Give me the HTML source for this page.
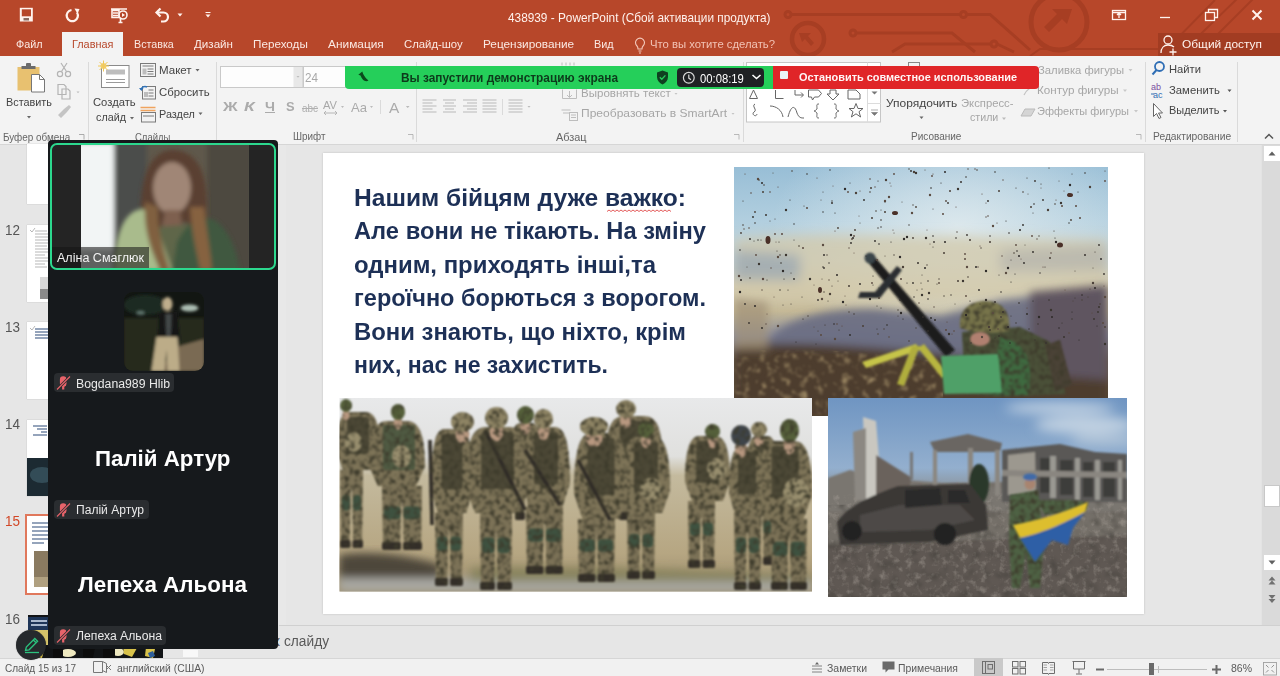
<!DOCTYPE html>
<html><head><meta charset="utf-8">
<style>
*{margin:0;padding:0;box-sizing:border-box}
html,body{width:1280px;height:676px;overflow:hidden;background:#E6E6E6;font-family:"Liberation Sans",sans-serif;position:relative}
.a{position:absolute}
.t{position:absolute;white-space:nowrap;line-height:1}
#title{left:0;top:0;width:1280px;height:56px;background:#B7472A}
.tab{position:absolute;top:38px;font-size:12.5px;color:#FBE9E3;white-space:nowrap;line-height:1}
#ribbon{left:0;top:56px;width:1280px;height:89px;background:#F3F3F3;border-bottom:1px solid #D6D6D6}
.rl{position:absolute;font-size:12px;color:#444;white-space:nowrap;line-height:1}
.gl{position:absolute;top:74px;font-size:10.5px;color:#666;white-space:nowrap;line-height:1}
.sep{position:absolute;top:6px;width:1px;height:80px;background:#DADADA}
.dis{color:#A6A6A6}
.stx{font-size:23.5px;font-weight:bold;color:#1D3056}
</style></head><body>

<!-- TITLE BAR -->
<div id="title" class="a">
<svg class="a" style="left:0;top:0" width="1280" height="56" viewBox="0 0 1280 56">
 <g fill="none" stroke="#A73E23" stroke-width="3">
  <circle cx="788" cy="14.5" r="3"></circle><path d="M791 14.5H960"></path><circle cx="963.5" cy="14.5" r="3"></circle><path d="M967 14.5H990L1030 50"></path>
  <circle cx="853" cy="33" r="3"></circle><path d="M856 33H952L975 52"></path>
  <path d="M892 52L905 44H991"></path><circle cx="994" cy="44" r="3"></circle><path d="M997 44L1014 52"></path>
  <circle cx="808" cy="39" r="16" stroke-width="4.5"></circle>
  <circle cx="1059" cy="22" r="28" stroke-width="5"></circle>
  <path d="M1160 56L1215 0M1178 56L1240 -4M1196 56L1262 -10" stroke-width="2"></path>
  <path d="M1030 56L1040 49H1280" stroke-width="2"></path>
 </g>
 <g fill="#A73E23">
  <path d="M799 33h12l-3 3 6 7-3 3-6-7-3 3z"></path>
  <path d="M1072 9h-20l5 5-13 13 5 5 13-13 5 5z"></path>
 </g>
 <rect x="1158" y="33" width="122" height="23" fill="#A23C22"></rect>
 <!-- QAT icons -->
 <g fill="none" stroke="#FFF3EE" stroke-width="1.6">
  <path d="M71.5 10a5.6 5.6 0 1 0 5.5 2.5" stroke-width="2.2"></path>
  <path d="M111 9h16M112 10.5h7v7h-7zM113 13h5M113 15.5h5M118.5 22.5h4M120.5 17.5v5"></path>
  <circle cx="123" cy="15" r="4"></circle>
  <path d="M158 12.5h5.5a4.5 4.5 0 0 1 0 9h-2.5" stroke-width="2.2"></path><path d="M160.5 8.5l-4 4 4 4" stroke-width="2.2"></path>
 </g>
 <rect x="19.8" y="7.8" width="13" height="13.7" fill="#FFF3EE"></rect>
 <rect x="21.8" y="9.3" width="9.2" height="7" fill="#B7472A"></rect>
 <rect x="23.5" y="18" width="5.5" height="2.5" fill="#8A6A60"></rect>
 <path d="M74.5 8.5l5 0.5-2 5z" fill="#FFF3EE"></path>
 <path d="M122 13l3 2-3 2z" fill="#FFF3EE"></path>
 <path d="M177.5 13.5h5l-2.5 3z" fill="#FFF3EE"></path>
 <path d="M205.5 12.5h5" stroke="#FFF3EE" stroke-width="1"></path><path d="M205.5 14.5h5l-2.5 3z" fill="#FFF3EE"></path>
 <!-- window buttons -->
 <g fill="none" stroke="#FFF3EE" stroke-width="1.3">
  <rect x="1112.5" y="10.5" width="13" height="9"></rect><path d="M1119 18V13M1117 15l2-2 2 2M1113 12.5h12"></path>
  <path d="M1160 17.5h10"></path>
  <rect x="1205.5" y="12.5" width="9" height="8"></rect><path d="M1208.5 12.5v-3h9v8h-3"></path>
 </g>
 <path d="M1252.5 10.5l9 9M1261.5 10.5l-9 9" stroke="#FFF3EE" stroke-width="2"></path>
 <!-- share icon -->
 <g fill="none" stroke="#FFF3EE" stroke-width="1.3">
  <circle cx="1168" cy="40" r="4"></circle><path d="M1161 53c0-5 3-8 7-8s5 1 6 2M1173 48.5v7M1169.5 52h7"></path>
 </g>
 <!-- tell me lightbulb -->
 <g fill="none" stroke="#F4C9BC" stroke-width="1.1">
  <path d="M637 46a4.5 4.5 0 1 1 6 0c-1 1-1 2-1 3h-4c0-1 0-2-1-3z"></path><path d="M638.5 51h3M639 53h2"></path>
 </g>
</svg>
<div class="t" style="left: 507.8px; top: 10.5px; font-size: 13px; color: rgb(255, 243, 238); transform: scaleX(0.9094); transform-origin: 0px 50%;">438939 - PowerPoint (Сбой активации продукта)</div>
<div class="tab" style="left: 15.6px; top: 39.3px; font-size: 11.5px; transform: scaleX(0.9406); transform-origin: 0px 50%;">Файл</div>
<div class="a" style="left:62px;top:32px;width:61px;height:25px;background:#F3F3F3"></div>
<div class="tab" style="left: 71.9px; top: 39.3px; font-size: 11.5px; color: rgb(183, 71, 42); transform: scaleX(0.9456); transform-origin: 0px 50%;">Главная</div>
<div class="tab" style="left: 134.4px; top: 39.3px; font-size: 11.5px; transform: scaleX(0.931); transform-origin: 0px 50%;">Вставка</div>
<div class="tab" style="left: 193.8px; top: 39.3px; font-size: 11.5px; transform: scaleX(1.0089); transform-origin: 0px 50%;">Дизайн</div>
<div class="tab" style="left: 253px; top: 39.3px; font-size: 11.5px; transform: scaleX(1.0157); transform-origin: 0px 50%;">Переходы</div>
<div class="tab" style="left: 328px; top: 39.3px; font-size: 11.5px; transform: scaleX(1.0333); transform-origin: 0px 50%;">Анимация</div>
<div class="tab" style="left: 403.8px; top: 39.3px; font-size: 11.5px; transform: scaleX(0.9845); transform-origin: 0px 50%;">Слайд-шоу</div>
<div class="tab" style="left: 482.8px; top: 39.3px; font-size: 11.5px; transform: scaleX(1.0269); transform-origin: 0px 50%;">Рецензирование</div>
<div class="tab" style="left: 593.8px; top: 39.3px; font-size: 11.5px; transform: scaleX(0.9417); transform-origin: 0px 50%;">Вид</div>
<div class="tab" style="left: 650px; top: 39.3px; font-size: 11.5px; color: rgb(242, 195, 181); transform: scaleX(0.9832); transform-origin: 0px 50%;">Что вы хотите сделать?</div>
<div class="tab" style="left: 1182px; top: 39.3px; font-size: 11.5px; color: rgb(255, 243, 238); transform: scaleX(1.0354); transform-origin: 0px 50%;">Общий доступ</div>
</div>

<!-- RIBBON -->
<div id="ribbon" class="a">
<div class="sep" style="left:88px"></div>
<div class="sep" style="left:216px"></div>
<div class="sep" style="left:416px"></div>
<div class="sep" style="left:743px"></div>
<div class="sep" style="left:1145px"></div>
<div class="sep" style="left:1237px"></div>
<svg class="a" style="left:0;top:0" width="1280" height="88" viewBox="0 56 1280 88">
 <!-- paste -->
 <rect x="17.5" y="67" width="22" height="23.5" fill="#E8C170"></rect>
 <path d="M21.5 66h14v3h-14z" fill="#6B6B6B"></path><rect x="26" y="63" width="5" height="4" rx="1" fill="#6B6B6B"></rect>
 <path d="M31.5 74.5h8l5 5v12.5h-13z" fill="#fff" stroke="#777" stroke-width="1"></path>
 <path d="M39.5 74.5v5h5" fill="none" stroke="#777" stroke-width="1"></path>
 <path d="M27 116h4l-2 2.5z" fill="#666"></path>
 <!-- scissors, copy, painter (disabled) -->
 <g fill="none" stroke="#B4B4B4" stroke-width="1.2">
  <circle cx="60" cy="74" r="2.6"></circle><circle cx="68" cy="74" r="2.6"></circle><path d="M61.5 71.5L67 63M66.5 71.5L61 63"></path>
  <path d="M58 84.5h6l2 2v8h-8zM62 89h6l2 2v8h-8z"></path>
 </g>
 <path d="M76.5 91.5h3l-1.5 1.8z" fill="#BBB"></path>
 <path d="M58 115l6-6 3 3-6 6zM64 109l5-4 2 2-4 5z" fill="#C4C4C4"></path>
 <path d="M79 134.5h5v5" fill="none" stroke="#999" stroke-width="0.8"></path>
 <!-- new slide -->
 <rect x="101.5" y="65.5" width="27.5" height="22" fill="#fff" stroke="#8A8A8A" stroke-width="1"></rect>
 <rect x="106" y="69.5" width="19" height="5" fill="#BDBDBD"></rect>
 <path d="M106 79.5h19M106 82.5h19" stroke="#9A9A9A" stroke-width="1"></path>
 <circle cx="103.5" cy="66" r="3" fill="#F1D27A"></circle>
 <path d="M103.5 60.5v11M98 66h11M99.5 62l8 8M107.5 62l-8 8" stroke="#F1C95A" stroke-width="1"></path>
 <path d="M130 117h4l-2 2.5z" fill="#666"></path>
 <!-- layout/reset/section icons -->
 <g fill="none" stroke="#7A7A7A" stroke-width="1">
  <rect x="140.5" y="63.5" width="15" height="13"></rect><path d="M142.5 66h11M147.5 69h6M147.5 71.5h6M147.5 74h6"></path>
  <rect x="142.5" y="86.5" width="13" height="12.5"></rect><path d="M148.5 90h5M148.5 93h5M148.5 96h5"></path>
  <rect x="141.5" y="112.5" width="14" height="9.5"></rect><path d="M143 116h11"></path>
 </g>
 <rect x="142.5" y="68.5" width="4" height="6" fill="#BDBDBD"></rect>
 <rect x="144" y="92" width="4" height="5" fill="#BDBDBD"></rect>
 <path d="M141 90a4 4 0 0 1 6-3" fill="none" stroke="#2F72B8" stroke-width="1.5"></path><path d="M139 88l2.5 3 2-3z" fill="#2F72B8"></path>
 <path d="M140.5 107.5h15M140.5 110.5h15" stroke="#F0A35E" stroke-width="1.3"></path>
 <path d="M195.5 69h4l-2 2.5z M198.5 112.5h4l-2 2.5z" fill="#666"></path>
 <!-- font boxes -->
 <rect x="220.5" y="66.5" width="82" height="21" fill="#FDFDFD" stroke="#C9C9C9"></rect>
 <rect x="293.5" y="67" width="9" height="20" fill="#E8E8E8"></rect>
 <rect x="303.5" y="66.5" width="42" height="21" fill="#FDFDFD" stroke="#C9C9C9"></rect>
 <path d="M296.5 76h3l-1.5 1.8z" fill="#BBB"></path>
 <!-- align icons -->
 <g stroke="#B9B9B9" stroke-width="1.1">
  <path d="M422.5 100h14M422.5 103h10M422.5 106h14M422.5 109h10M422.5 112h14"></path>
  <path d="M443 100h13M445 103h9M443 106h13M445 109h9M443 112h13"></path>
  <path d="M463 100h14M467 103h10M463 106h14M467 109h10M463 112h14"></path>
  <path d="M482.5 100h14M482.5 103h14M482.5 106h14M482.5 109h14M482.5 112h14"></path>
  <path d="M508.5 100h14M508.5 103h14M508.5 106h14M508.5 109h14M508.5 112h14"></path>
 </g>
 <path d="M502.5 99v16" stroke="#DADADA"></path>
 <path d="M527.5 106h3l-1.5 1.8z M406.5 106h3l-1.5 1.8z" fill="#BBB"></path>
 <g fill="none" stroke="#BDBDBD" stroke-width="1">
  <path d="M562 62.5v3M566 62.5v3M570 62.5v3M574 62.5v3"></path>
  <path d="M562.5 89.5v9h14v-9M569.5 91v6M567 95l2.5 2.5 2.5-2.5"></path>
  <path d="M561.5 110h9M563 113h7"></path><rect x="569.5" y="112.5" width="8" height="8" fill="#F3F3F3"></rect><path d="M571 115h5M571 117.5h5"></path>
 </g>
 <path d="M674.5 93h3l-1.5 1.8z M731.5 113h3l-1.5 1.8z" fill="#C4C4C4"></path>
 <path d="M734 134.5h5v5M408 134.5h5v5M1136 134.5h5v5" fill="none" stroke="#AAA" stroke-width="0.8"></path>
 <!-- shapes gallery -->
 <rect x="746.5" y="62.5" width="134" height="59.5" fill="#fff" stroke="#C6C6C6"></rect>
 <path d="M867.5 62.5v59.5M867.5 84.5h13M867.5 103.5h13" stroke="#DCDCDC" fill="none"></path>
 <path d="M871.5 91.5h6l-3 3z" fill="#777"></path>
 <path d="M871 110h7M871.5 112.5h6l-3 3z" fill="#777" stroke="#777" stroke-width="0.6"></path>
 <g fill="none" stroke="#666" stroke-width="1">
  <path d="M749.5 98.5l4-8.5 4 8.5z"></path>
  <path d="M775.5 90v8.5h8"></path>
  <path d="M795 90v5h8M801 92.5l2.5 2.5-2.5 2.5"></path>
  <path d="M808.5 90h10l3 3.5-3 3.5h-4l-2 3-1-3h-3z"></path>
  <path d="M830 90v4h-3l6 6 6-6h-3v-4z"></path>
  <path d="M848 90v9h12v-5l-4-4z"></path>
  <path d="M755 104c-4 2 3 6-1 8-3 2 2 6 3 2"></path>
  <path d="M770 106c6 0 12 4 13 11"></path>
  <path d="M788 117c3-12 7-12 9-4 2 5 4 5 7 5"></path>
  <path d="M819 104c-3 0-2 1-2 5-1 1-2 2-3 2 1 0 2 1 3 2 0 4-1 5 2 5"></path>
  <path d="M834 104c3 0 2 1 2 5 1 1 2 2 3 2-1 0-2 1-3 2 0 4 1 5-2 5"></path>
  <path d="M856 103.5l2 5h5l-4 3.2 1.6 5.3-4.6-3.2-4.6 3.2 1.6-5.3-4-3.2h5z"></path>
 </g>
 <!-- arrange -->
 <rect x="908.5" y="62.5" width="11" height="11" fill="none" stroke="#888"></rect>
 <path d="M919.5 116.5h4l-2 2.5z" fill="#666"></path>
 <path d="M1002 117.5h4l-2 2.5z" fill="#BBB"></path>
 <path d="M1128.5 69h4l-2 2.5z M1123 89.5h4l-2 2.5z M1134 110h4l-2 2.5z" fill="#C8C8C8"></path>
 <g fill="none" stroke="#C2C2C2" stroke-width="1.2">
  <path d="M1023 73l6-6 5 5-6 6zM1034 67v8"></path>
  <path d="M1024 95c3-6 7-8 11-8"></path>
 </g>
 <path d="M1021 116l4-7h10l-4 7z" fill="#D5D5D5" stroke="#BBB" stroke-width="1"></path>
 <!-- edit group -->
 <circle cx="1159.5" cy="66.5" r="4.5" fill="none" stroke="#2F6EB5" stroke-width="1.8"></circle>
 <path d="M1156.5 70l-4 4.5" stroke="#2F6EB5" stroke-width="2"></path>
 <text x="1151" y="90" font-family="Liberation Sans" font-size="9" fill="#7A4FA0">ab</text>
 <text x="1153" y="97.5" font-family="Liberation Sans" font-size="9" fill="#2F6EB5">ac</text>
 <path d="M1151 94h3" stroke="#2F6EB5" stroke-width="1"></path>
 <path d="M1153.5 103.5v13l3-3 2.5 5 2-1-2.5-4.5h4z" fill="#fff" stroke="#666" stroke-width="1"></path>
 <path d="M1227.5 89.5h4l-2 2.5z M1223 110h4l-2 2.5z" fill="#555"></path>
 <path d="M1265 138.5l4-4 4 4" fill="none" stroke="#555" stroke-width="1.5"></path>
</svg>
<!-- texts: cap-top minus 0.12*fs -->
<div class="rl" style="left: 6px; top: 41.2px; font-size: 11.5px; transform: scaleX(0.9436); transform-origin: 0px 50%;">Вставить</div>
<div class="gl" style="left: 2.7px; top: 75.8px; transform: scaleX(0.9431); transform-origin: 0px 50%;">Буфер обмена</div>
<div class="rl" style="left: 93px; top: 40.9px; font-size: 11.5px; transform: scaleX(0.9767); transform-origin: 0px 50%;">Создать</div>
<div class="rl" style="left: 96px; top: 56.2px; font-size: 11.5px; transform: scaleX(0.9375); transform-origin: 0px 50%;">слайд</div>
<div class="rl" style="left: 158.6px; top: 9.3px; font-size: 11.5px; transform: scaleX(1.0016); transform-origin: 0px 50%;">Макет</div>
<div class="rl" style="left: 158.6px; top: 31.2px; font-size: 11.5px; transform: scaleX(0.9897); transform-origin: 0px 50%;">Сбросить</div>
<div class="rl" style="left: 158.6px; top: 53.2px; font-size: 11.5px; transform: scaleX(0.9443); transform-origin: 0px 50%;">Раздел</div>
<div class="gl" style="left: 134.6px; top: 75.8px; transform: scaleX(0.9055); transform-origin: 0px 50%;">Слайды</div>
<div class="rl dis" style="left: 305.4px; top: 15.5px; font-size: 12px; color: rgb(168, 168, 168); transform: scaleX(0.9731); transform-origin: 0px 50%;">24</div>
<div class="rl" style="left: 222.9px; top: 44.3px; font-size: 13.5px; font-weight: bold; color: rgb(171, 171, 171); transform: scaleX(1.1964); transform-origin: 0px 50%;">Ж</div>
<div class="rl" style="left: 244px; top: 44.3px; font-size: 13.5px; font-weight: bold; font-style: italic; color: rgb(171, 171, 171); transform: scaleX(1.2872); transform-origin: 0px 50%;">К</div>
<div class="rl" style="left: 265.3px; top: 44.3px; font-size: 13.5px; font-weight: bold; color: rgb(171, 171, 171); text-decoration: underline; transform: scaleX(1.0526); transform-origin: 0px 50%;">Ч</div>
<div class="rl" style="left: 285.6px; top: 44.3px; font-size: 13.5px; font-weight: bold; color: rgb(171, 171, 171); transform: scaleX(0.9539); transform-origin: 0px 50%;">S</div>
<div class="rl" style="left: 302px; top: 47px; font-size: 11px; color: rgb(176, 176, 176); text-decoration: line-through; transform: scaleX(0.9014); transform-origin: 0px 50%;">abc</div>
<div class="rl" style="left: 323px; top: 43.5px; font-size: 11px; color: rgb(168, 168, 168); transform: scaleX(1.0101); transform-origin: 0px 50%;">AV</div>
<svg class="a" style="left:323px;top:54px" width="16" height="6"><path d="M1 3h13M3 1L1 3l2 2M12 1l2 2-2 2" fill="none" stroke="#B0B0B0" stroke-width="0.9"></path></svg>
<div class="rl" style="left: 351px; top: 45px; font-size: 13px; color: rgb(171, 171, 171); transform: scaleX(1.0059); transform-origin: 0px 50%;">Aa</div>
<div class="rl" style="left: 388.7px; top: 43.5px; font-size: 15px; color: rgb(171, 171, 171); transform: scaleX(1.0284); transform-origin: 0px 50%;">A</div>
<svg class="a" style="left:340px;top:49px" width="80" height="6"><path d="M1 1h3l-1.5 2zM30 1h3l-1.5 2zM66 1h3l-1.5 2z" fill="#BBB"></path></svg>
<div class="a" style="left:380px;top:44px;width:1px;height:14px;background:#DADADA"></div>
<div class="gl" style="left: 292.5px; top: 75.2px; transform: scaleX(0.9408); transform-origin: 0px 50%;">Шрифт</div>
<div class="rl dis" style="left: 580.5px; top: 32px; font-size: 11.5px; transform: scaleX(1.0023); transform-origin: 0px 50%;">Выровнять текст</div>
<div class="rl dis" style="left: 580.5px; top: 52px; font-size: 11.5px; transform: scaleX(1.0466); transform-origin: 0px 50%;">Преобразовать в SmartArt</div>
<div class="gl" style="left: 556px; top: 75.5px; transform: scaleX(1.0384); transform-origin: 0px 50%;">Абзац</div>
<div class="rl" style="left: 885.5px; top: 41.6px; font-size: 11.5px; transform: scaleX(1.0418); transform-origin: 0px 50%;">Упорядочить</div>
<div class="rl dis" style="left: 961px; top: 41.6px; font-size: 11.5px; transform: scaleX(0.9807); transform-origin: 0px 50%;">Экспресс-</div>
<div class="rl dis" style="left: 969.7px; top: 56.2px; font-size: 11.5px; transform: scaleX(0.9255); transform-origin: 0px 50%;">стили</div>
<div class="rl dis" style="left: 1038px; top: 8.6px; font-size: 11.5px; transform: scaleX(0.9792); transform-origin: 0px 50%;">Заливка фигуры</div>
<div class="rl dis" style="left: 1037px; top: 28.8px; font-size: 11.5px; transform: scaleX(1.0159); transform-origin: 0px 50%;">Контур фигуры</div>
<div class="rl dis" style="left: 1037px; top: 49.5px; font-size: 11.5px; transform: scaleX(0.9599); transform-origin: 0px 50%;">Эффекты фигуры</div>
<div class="gl" style="left: 910.6px; top: 74.8px; transform: scaleX(0.9529); transform-origin: 0px 50%;">Рисование</div>
<div class="rl" style="left: 1169px; top: 8.1px; font-size: 11.5px; transform: scaleX(0.9748); transform-origin: 0px 50%;">Найти</div>
<div class="rl" style="left: 1169px; top: 28.6px; font-size: 11.5px; transform: scaleX(0.9828); transform-origin: 0px 50%;">Заменить</div>
<div class="rl" style="left: 1169px; top: 49.3px; font-size: 11.5px; transform: scaleX(0.9498); transform-origin: 0px 50%;">Выделить</div>
<div class="gl" style="left: 1152.8px; top: 75.2px; transform: scaleX(0.9775); transform-origin: 0px 50%;">Редактирование</div>
</div>

<!-- SHARE BARS -->
<div class="a" style="left:345px;top:66px;width:430px;height:22.5px;background:#25CF5A;border-radius:0 0 0 4px"></div>
<svg class="a" style="left:355px;top:70px" width="16" height="15"><path d="M3.3 4.8L7.3 1.5 8.2 4C9.5 6.5 11 8.5 13.5 10.5 11.5 11.8 9.3 11 7.8 9.5 6.7 8.3 6 7 5.5 5.6z" fill="#0B4A1C"></path></svg>
<div class="t" style="left: 401px; top: 72.3px; font-size: 12px; font-weight: bold; color: rgb(13, 58, 27); transform: scaleX(0.9886); transform-origin: 0px 50%;">Вы запустили демонстрацию экрана</div>
<svg class="a" style="left:656px;top:70px" width="13" height="15"><path d="M6.5 0.5l5.5 2v4.5c0 3.5-2.5 6-5.5 7.5C3.5 13 1 10.5 1 7V2.5z" fill="#0F4020"></path><path d="M3.8 7.2l2 2 3.6-3.8" fill="none" stroke="#27CC5C" stroke-width="1.3"></path></svg>
<div class="a" style="left:677px;top:68.3px;width:87px;height:18.7px;background:#1F2124;border-radius:4px"></div>
<svg class="a" style="left:682px;top:71px" width="14" height="14"><circle cx="6.8" cy="6.8" r="5.4" fill="none" stroke="#D8D8D8" stroke-width="1.2"></circle><path d="M6.8 3.5v3.6l2.2 1.6" fill="none" stroke="#D8D8D8" stroke-width="1.2"></path></svg>
<div class="t" style="left: 700px; top: 72px; font-size: 13px; color: rgb(255, 255, 255); transform: scaleX(0.8655); transform-origin: 0px 50%;">00:08:19</div>
<svg class="a" style="left:751px;top:73px" width="11" height="8"><path d="M1.5 2l4 3.5 4-3.5" fill="none" stroke="#fff" stroke-width="1.6"></path></svg>
<div class="a" style="left:772.5px;top:66px;width:266.5px;height:22.7px;background:#E02528;border-radius:0 4px 4px 0"></div>
<div class="a" style="left:779.7px;top:71px;width:8.5px;height:8px;background:#EAF3F6;border-radius:1px"></div>
<div class="t" style="left: 798.8px; top: 72.4px; font-size: 11.5px; font-weight: bold; color: rgb(255, 246, 246); transform: scaleX(0.9488); transform-origin: 0px 50%;">Остановить совместное использование</div>

<!-- SLIDE -->
<div class="a" id="slide" style="left:323px;top:153px;width:821px;height:461px;background:#fff;box-shadow:0 0 2px rgba(0,0,0,.18)"></div>
<div class="t stx" style="left: 354.2px; top: 186.7px; transform: scaleX(1.0455); transform-origin: 0px 50%;">Нашим бійцям дуже важко:</div>
<div class="t stx" style="left: 354.2px; top: 220.2px; transform: scaleX(1.009); transform-origin: 0px 50%;">Але вони не тікають. На зміну</div>
<div class="t stx" style="left: 354.2px; top: 253.7px; transform: scaleX(1.0181); transform-origin: 0px 50%;">одним, приходять інші,та</div>
<div class="t stx" style="left: 354.2px; top: 287.2px; transform: scaleX(1.0008); transform-origin: 0px 50%;">героїчно борються з ворогом.</div>
<div class="t stx" style="left: 354.2px; top: 320.7px; transform: scaleX(1.016); transform-origin: 0px 50%;">Вони знають, що ніхто, крім</div>
<div class="t stx" style="left: 354.2px; top: 354.2px; transform: scaleX(0.9811); transform-origin: 0px 50%;">них, нас не захистить.</div>
<svg class="a" style="left:0;top:0" width="1280" height="676" viewBox="0 0 1280 676">
 <defs>
  <clipPath id="c1"><rect x="734" y="167" width="374" height="249"></rect></clipPath>
  <clipPath id="c2"><rect x="339.5" y="398" width="472.5" height="193.5"></rect></clipPath>
  <clipPath id="c3"><rect x="828" y="398" width="299" height="199"></rect></clipPath>
  <linearGradient id="g1" x1="0" y1="0" x2="0" y2="1"><stop offset="0" stop-color="#98BED6"></stop><stop offset="0.22" stop-color="#B2CFDF"></stop><stop offset="0.38" stop-color="#C6D2D4"></stop><stop offset="0.48" stop-color="#D2CAB0"></stop><stop offset="0.58" stop-color="#C4B896"></stop><stop offset="0.68" stop-color="#8C8E9C"></stop><stop offset="0.78" stop-color="#6A5A4C"></stop><stop offset="1" stop-color="#56402E"></stop></linearGradient>
  <radialGradient id="g1b" cx="0.6" cy="0.25" r="0.5"><stop offset="0" stop-color="#E6EEF0" stop-opacity="0.8"></stop><stop offset="1" stop-color="#E6EEF0" stop-opacity="0"></stop></radialGradient>
  <linearGradient id="g2" x1="0" y1="0" x2="0" y2="1">
   <stop offset="0" stop-color="#E8E9EA"></stop><stop offset="0.3" stop-color="#E0E0DE"></stop><stop offset="0.4" stop-color="#C4BA9E"></stop><stop offset="0.8" stop-color="#B6A682"></stop><stop offset="1" stop-color="#9A8C6C"></stop>
  </linearGradient>
  <linearGradient id="g3" x1="0" y1="0" x2="0" y2="1">
   <stop offset="0" stop-color="#6F95C2"></stop><stop offset="0.35" stop-color="#93AFCE"></stop><stop offset="0.48" stop-color="#8A8E90"></stop><stop offset="0.58" stop-color="#6A6866"></stop><stop offset="0.8" stop-color="#5E5852"></stop><stop offset="1" stop-color="#4C4640"></stop>
  </linearGradient>
  <filter id="camo" x="-5%" y="-5%" width="110%" height="110%" color-interpolation-filters="sRGB"><feTurbulence type="fractalNoise" baseFrequency="0.2" numOctaves="2" seed="5" result="n"></feTurbulence><feColorMatrix in="n" type="matrix" values="0 0 0 0 0.24  0 0 0 0 0.23  0 0 0 0 0.17  0 0 0 -3 1.7" result="dk"></feColorMatrix><feComposite in="dk" in2="SourceGraphic" operator="in" result="d2"></feComposite><feMerge result="m"><feMergeNode in="SourceGraphic"></feMergeNode><feMergeNode in="d2"></feMergeNode></feMerge><feGaussianBlur in="m" stdDeviation="1"></feGaussianBlur></filter>
  <filter id="soil" x="0" y="0" width="100%" height="100%" color-interpolation-filters="sRGB"><feTurbulence type="fractalNoise" baseFrequency="0.12" numOctaves="3" seed="9" result="n"></feTurbulence><feColorMatrix in="n" type="matrix" values="0 0 0 0 0.60  0 0 0 0 0.52  0 0 0 0 0.38  0 0 0 -3 1.45" result="t"></feColorMatrix><feGaussianBlur in="t" stdDeviation="0.8" result="tb"></feGaussianBlur><feComposite in="tb" in2="SourceAlpha" operator="in"></feComposite></filter>
  <filter id="rubble" x="0" y="0" width="100%" height="100%" color-interpolation-filters="sRGB"><feTurbulence type="fractalNoise" baseFrequency="0.15" numOctaves="3" seed="4" result="n"></feTurbulence><feColorMatrix in="n" type="matrix" values="0 0 0 0 0.66  0 0 0 0 0.63  0 0 0 0 0.60  0 0 0 -3 1.5" result="t"></feColorMatrix><feGaussianBlur in="t" stdDeviation="0.6" result="tb"></feGaussianBlur><feComposite in="tb" in2="SourceAlpha" operator="in"></feComposite></filter>
  <filter id="dark" x="0" y="0" width="100%" height="100%" color-interpolation-filters="sRGB"><feTurbulence type="fractalNoise" baseFrequency="0.1" numOctaves="2" seed="13" result="n"></feTurbulence><feColorMatrix in="n" type="matrix" values="0 0 0 0 0.25  0 0 0 0 0.24  0 0 0 0 0.22  0 0 0 -3 1.5" result="t"></feColorMatrix><feGaussianBlur in="t" stdDeviation="0.8" result="tb"></feGaussianBlur><feComposite in="tb" in2="SourceAlpha" operator="in"></feComposite></filter>
  <filter id="bl1" x="-20%" y="-20%" width="140%" height="140%"><feGaussianBlur stdDeviation="1.2"></feGaussianBlur></filter>
  <filter id="bl3" x="-20%" y="-20%" width="140%" height="140%"><feGaussianBlur stdDeviation="4"></feGaussianBlur></filter>
  <filter id="bl6" x="-30%" y="-30%" width="160%" height="160%"><feGaussianBlur stdDeviation="6"></feGaussianBlur></filter>
 </defs>
 <!-- PHOTO 1: mortar -->
 <g clip-path="url(#c1)">
  <rect x="734" y="167" width="374" height="249" fill="url(#g1)"></rect>
  <rect x="734" y="167" width="374" height="249" fill="url(#g1b)"></rect>
  <g filter="url(#bl6)">
   <path d="M734 240 C800 232 900 235 1108 240 L1108 300 L734 302z" fill="#D2C8AA" opacity="0.75"></path>
   <path d="M734 250 L 800 255 L 800 280 L734 280z" fill="#8A9CB0" opacity="0.6"></path>
   <path d="M1000 250 L 1108 245 L1108 270 L1000 272z" fill="#A8A8A8" opacity="0.5"></path>
  </g>
  <g filter="url(#bl3)">
   <path d="M765 350 C770 320 830 306 880 309 L 940 316 L1000 300 L1108 288 L1108 400 L 765 400z" fill="#6A6C82" opacity="0.92"></path>
   <path d="M1030 292 L1108 285 L1108 400 L1030 400z" fill="#5E5460"></path>
   <path d="M734 346 C800 340 880 348 960 356 L1000 372 L1108 380 L1108 416 L734 416z" fill="#4E3C2E"></path>
   <path d="M734 298 L 768 302 L 768 350 L734 350z" fill="#A09078" opacity="0.7"></path>
  </g>
  <path d="M734 352 C800 346 880 352 940 362 L 945 416 L734 416z" fill="#000" filter="url(#soil)"></path>
  <g filter="url(#bl1)">
   <path d="M867 261 L875 257 L955 350 L946 357 z" fill="#1E1E1E"></path>
   <circle cx="870" cy="258" r="5.5" fill="#3A4448"></circle>
   <path d="M860 292 L875 292 L897 266 L902 270 L880 298 L858 298z" fill="#2A2F32"></path>
   <path d="M862 362 L916 344 L920 350 L866 368z" fill="#C6C448"></path>
   <path d="M912 346 L920 346 L904 386 L897 384z" fill="#B0AE3C"></path>
   <path d="M918 348 L924 344 L948 374 L942 378z" fill="#B8B640"></path>
  </g>
  <g filter="url(#camo)">
   <path d="M962 332 L1020 327 L1050 342 L1066 394 L1000 397 L965 393z" fill="#4A5038"></path>
   <path d="M1000 337 C1025 342 1035 360 1028 395 L 990 395z" fill="#3E6A40"></path>
   <path d="M1045 345 L1060 340 L1072 385 L1055 392z" fill="#4A4236"></path>
   <path d="M960 328 C958 308 972 301 986 301 C1002 301 1011 312 1009 331 C995 334 975 334 960 328z" fill="#77744A"></path>
  </g>
  <ellipse cx="980" cy="339" rx="10" ry="7" fill="#B08070" filter="url(#bl1)"></ellipse>
  <path d="M941 356 L998 354 L1002 393 L944 394z" fill="#4FA068" filter="url(#bl1)"></path>
  <circle cx="903" cy="267" r="1.2" fill="#4A4038"></circle><circle cx="903" cy="319" r="0.6" fill="#2E2A28"></circle><circle cx="1033" cy="252" r="0.9" fill="#2E2A28"></circle><circle cx="770" cy="221" r="0.5" fill="#3A3530"></circle><circle cx="956" cy="238" r="0.8" fill="#2E2A28"></circle><circle cx="966" cy="315" r="0.5" fill="#3A3530"></circle><circle cx="749" cy="323" r="0.9" fill="#3A3530"></circle><circle cx="1023" cy="225" r="0.9" fill="#2E2A28"></circle><circle cx="928" cy="281" r="0.8" fill="#3A3530"></circle><circle cx="981" cy="248" r="0.7" fill="#4A4038"></circle><circle cx="1105" cy="344" r="1.2" fill="#3A3530"></circle><circle cx="997" cy="223" r="0.6" fill="#5A4A40"></circle><circle cx="747" cy="267" r="0.5" fill="#4A4038"></circle><circle cx="775" cy="219" r="0.5" fill="#3A3530"></circle><circle cx="1049" cy="168" r="0.6" fill="#3A3530"></circle><circle cx="909" cy="341" r="0.8" fill="#4A4038"></circle><circle cx="763" cy="279" r="1.2" fill="#5A4A40"></circle><circle cx="860" cy="223" r="0.5" fill="#4A4038"></circle><circle cx="1016" cy="188" r="0.6" fill="#3A3530"></circle><circle cx="740" cy="250" r="0.8" fill="#2E2A28"></circle><circle cx="988" cy="201" r="0.9" fill="#2E2A28"></circle><circle cx="1100" cy="304" r="0.8" fill="#4A4038"></circle><circle cx="779" cy="242" r="0.6" fill="#3A3530"></circle><circle cx="835" cy="339" r="1.2" fill="#5A4A40"></circle><circle cx="1105" cy="171" r="0.6" fill="#4A4038"></circle><circle cx="1104" cy="274" r="0.9" fill="#3A3530"></circle><circle cx="751" cy="193" r="0.8" fill="#5A4A40"></circle><circle cx="739" cy="276" r="1.2" fill="#5A4A40"></circle><circle cx="878" cy="181" r="0.6" fill="#2E2A28"></circle><circle cx="741" cy="233" r="0.9" fill="#4A4038"></circle><circle cx="783" cy="271" r="1.2" fill="#2E2A28"></circle><circle cx="1056" cy="200" r="0.6" fill="#5A4A40"></circle><circle cx="1072" cy="312" r="0.6" fill="#2E2A28"></circle><circle cx="794" cy="279" r="0.9" fill="#2E2A28"></circle><circle cx="990" cy="236" r="0.8" fill="#3A3530"></circle><circle cx="891" cy="186" r="0.5" fill="#5A4A40"></circle><circle cx="824" cy="292" r="0.7" fill="#4A4038"></circle><circle cx="1040" cy="273" r="0.7" fill="#2E2A28"></circle><circle cx="1079" cy="340" r="0.6" fill="#2E2A28"></circle><circle cx="913" cy="283" r="0.9" fill="#3A3530"></circle><circle cx="839" cy="330" r="0.6" fill="#3A3530"></circle><circle cx="761" cy="240" r="0.6" fill="#3A3530"></circle><circle cx="753" cy="217" r="0.9" fill="#2E2A28"></circle><circle cx="770" cy="192" r="0.8" fill="#5A4A40"></circle><circle cx="979" cy="290" r="0.9" fill="#2E2A28"></circle><circle cx="954" cy="331" r="0.8" fill="#5A4A40"></circle><circle cx="995" cy="338" r="0.5" fill="#3A3530"></circle><circle cx="914" cy="297" r="0.7" fill="#2E2A28"></circle><circle cx="1105" cy="181" r="0.9" fill="#5A4A40"></circle><circle cx="1008" cy="327" r="1.0" fill="#2E2A28"></circle><circle cx="1029" cy="329" r="0.7" fill="#3A3530"></circle><circle cx="989" cy="327" r="1.2" fill="#4A4038"></circle><circle cx="1085" cy="173" r="0.8" fill="#3A3530"></circle><circle cx="967" cy="235" r="0.9" fill="#3A3530"></circle><circle cx="961" cy="182" r="1.0" fill="#3A3530"></circle><circle cx="1103" cy="323" r="1.0" fill="#5A4A40"></circle><circle cx="879" cy="298" r="0.9" fill="#4A4038"></circle><circle cx="898" cy="316" r="0.5" fill="#3A3530"></circle><circle cx="850" cy="183" r="0.5" fill="#2E2A28"></circle><circle cx="1090" cy="187" r="1.2" fill="#4A4038"></circle><circle cx="830" cy="170" r="0.7" fill="#2E2A28"></circle><circle cx="986" cy="203" r="0.6" fill="#5A4A40"></circle><circle cx="980" cy="246" r="0.6" fill="#5A4A40"></circle><circle cx="885" cy="212" r="1.0" fill="#4A4038"></circle><circle cx="1033" cy="301" r="0.6" fill="#2E2A28"></circle><circle cx="878" cy="271" r="0.7" fill="#2E2A28"></circle><circle cx="786" cy="255" r="1.2" fill="#3A3530"></circle><circle cx="999" cy="336" r="0.7" fill="#2E2A28"></circle><circle cx="777" cy="251" r="0.6" fill="#4A4038"></circle><circle cx="877" cy="260" r="1.0" fill="#5A4A40"></circle><circle cx="1001" cy="317" r="0.9" fill="#4A4038"></circle><circle cx="854" cy="314" r="0.7" fill="#3A3530"></circle><circle cx="986" cy="217" r="0.7" fill="#5A4A40"></circle><circle cx="976" cy="267" r="1.0" fill="#2E2A28"></circle><circle cx="885" cy="201" r="1.2" fill="#5A4A40"></circle><circle cx="823" cy="192" r="0.5" fill="#3A3530"></circle><circle cx="901" cy="279" r="1.0" fill="#5A4A40"></circle><circle cx="1090" cy="289" r="0.6" fill="#4A4038"></circle><circle cx="830" cy="294" r="1.2" fill="#4A4038"></circle><circle cx="933" cy="174" r="0.6" fill="#5A4A40"></circle><circle cx="1024" cy="263" r="0.9" fill="#2E2A28"></circle><circle cx="881" cy="308" r="0.6" fill="#3A3530"></circle><circle cx="887" cy="325" r="0.8" fill="#2E2A28"></circle><circle cx="902" cy="202" r="0.5" fill="#4A4038"></circle><circle cx="939" cy="283" r="0.9" fill="#5A4A40"></circle><circle cx="907" cy="283" r="0.6" fill="#3A3530"></circle><circle cx="1003" cy="312" r="1.0" fill="#3A3530"></circle><circle cx="814" cy="327" r="0.5" fill="#5A4A40"></circle><circle cx="934" cy="307" r="0.7" fill="#5A4A40"></circle><circle cx="1072" cy="319" r="0.7" fill="#3A3530"></circle><circle cx="749" cy="228" r="0.8" fill="#5A4A40"></circle><circle cx="916" cy="173" r="1.2" fill="#3A3530"></circle><circle cx="894" cy="174" r="0.9" fill="#5A4A40"></circle><circle cx="990" cy="330" r="0.8" fill="#2E2A28"></circle><circle cx="1105" cy="327" r="0.9" fill="#4A4038"></circle><circle cx="1085" cy="255" r="1.0" fill="#3A3530"></circle><circle cx="1016" cy="245" r="0.9" fill="#5A4A40"></circle><circle cx="1043" cy="267" r="0.6" fill="#5A4A40"></circle><circle cx="851" cy="235" r="1.2" fill="#2E2A28"></circle><circle cx="848" cy="192" r="0.9" fill="#5A4A40"></circle><circle cx="948" cy="203" r="0.9" fill="#3A3530"></circle><circle cx="922" cy="275" r="0.5" fill="#3A3530"></circle><circle cx="926" cy="238" r="1.2" fill="#3A3530"></circle><circle cx="917" cy="290" r="0.5" fill="#4A4038"></circle><circle cx="889" cy="337" r="0.8" fill="#5A4A40"></circle><circle cx="827" cy="255" r="0.7" fill="#4A4038"></circle><circle cx="1069" cy="333" r="0.8" fill="#5A4A40"></circle><circle cx="776" cy="242" r="0.5" fill="#5A4A40"></circle><circle cx="783" cy="305" r="0.5" fill="#3A3530"></circle><circle cx="807" cy="208" r="1.0" fill="#5A4A40"></circle><circle cx="855" cy="230" r="0.9" fill="#4A4038"></circle><circle cx="774" cy="297" r="0.5" fill="#5A4A40"></circle><circle cx="1001" cy="292" r="0.8" fill="#3A3530"></circle><circle cx="875" cy="241" r="0.9" fill="#2E2A28"></circle><circle cx="935" cy="320" r="0.9" fill="#2E2A28"></circle><circle cx="931" cy="318" r="0.9" fill="#2E2A28"></circle><circle cx="822" cy="299" r="1.2" fill="#5A4A40"></circle><circle cx="1069" cy="223" r="0.7" fill="#2E2A28"></circle><circle cx="816" cy="344" r="0.5" fill="#2E2A28"></circle><circle cx="1064" cy="191" r="0.5" fill="#5A4A40"></circle><circle cx="879" cy="244" r="0.8" fill="#2E2A28"></circle><circle cx="810" cy="279" r="1.2" fill="#3A3530"></circle><circle cx="771" cy="268" r="0.7" fill="#5A4A40"></circle><circle cx="778" cy="257" r="1.2" fill="#5A4A40"></circle><circle cx="922" cy="289" r="0.6" fill="#3A3530"></circle><circle cx="914" cy="172" r="1.2" fill="#4A4038"></circle><circle cx="790" cy="200" r="0.6" fill="#2E2A28"></circle><circle cx="1046" cy="343" r="1.0" fill="#3A3530"></circle><circle cx="950" cy="191" r="1.0" fill="#4A4038"></circle><circle cx="764" cy="185" r="0.8" fill="#4A4038"></circle><circle cx="893" cy="230" r="0.6" fill="#5A4A40"></circle><circle cx="740" cy="292" r="1.2" fill="#2E2A28"></circle><circle cx="803" cy="248" r="1.0" fill="#5A4A40"></circle><circle cx="885" cy="202" r="0.6" fill="#3A3530"></circle><circle cx="925" cy="170" r="0.5" fill="#4A4038"></circle><circle cx="946" cy="201" r="0.9" fill="#5A4A40"></circle><circle cx="1033" cy="213" r="0.5" fill="#2E2A28"></circle><circle cx="1037" cy="239" r="0.7" fill="#5A4A40"></circle><circle cx="1019" cy="303" r="0.8" fill="#2E2A28"></circle><circle cx="1003" cy="180" r="0.7" fill="#5A4A40"></circle><circle cx="909" cy="169" r="0.7" fill="#3A3530"></circle><circle cx="821" cy="335" r="1.0" fill="#5A4A40"></circle><circle cx="860" cy="284" r="0.9" fill="#2E2A28"></circle><circle cx="933" cy="236" r="0.8" fill="#2E2A28"></circle><circle cx="995" cy="302" r="0.9" fill="#3A3530"></circle><circle cx="778" cy="187" r="0.6" fill="#5A4A40"></circle><circle cx="900" cy="257" r="1.2" fill="#2E2A28"></circle><circle cx="975" cy="169" r="0.7" fill="#5A4A40"></circle><circle cx="838" cy="228" r="0.9" fill="#4A4038"></circle><circle cx="1093" cy="268" r="0.5" fill="#4A4038"></circle><circle cx="1035" cy="181" r="0.9" fill="#3A3530"></circle><circle cx="878" cy="334" r="0.8" fill="#4A4038"></circle><circle cx="1094" cy="319" r="0.9" fill="#3A3530"></circle><circle cx="894" cy="255" r="0.7" fill="#4A4038"></circle><circle cx="957" cy="232" r="0.7" fill="#4A4038"></circle><circle cx="978" cy="267" r="0.7" fill="#5A4A40"></circle><circle cx="745" cy="304" r="0.9" fill="#3A3530"></circle><circle cx="970" cy="240" r="1.0" fill="#4A4038"></circle><circle cx="755" cy="223" r="0.8" fill="#3A3530"></circle><circle cx="951" cy="295" r="0.7" fill="#3A3530"></circle><circle cx="1031" cy="207" r="1.0" fill="#4A4038"></circle><circle cx="828" cy="301" r="0.5" fill="#3A3530"></circle><circle cx="1082" cy="295" r="0.8" fill="#2E2A28"></circle><circle cx="1098" cy="312" r="0.9" fill="#3A3530"></circle><circle cx="754" cy="241" r="0.5" fill="#2E2A28"></circle><circle cx="1054" cy="231" r="0.6" fill="#3A3530"></circle><circle cx="870" cy="192" r="0.8" fill="#4A4038"></circle><circle cx="958" cy="281" r="1.0" fill="#4A4038"></circle><circle cx="870" cy="299" r="1.2" fill="#2E2A28"></circle><circle cx="1088" cy="297" r="0.6" fill="#4A4038"></circle><circle cx="778" cy="326" r="1.2" fill="#5A4A40"></circle><circle cx="837" cy="275" r="1.0" fill="#2E2A28"></circle><circle cx="970" cy="301" r="0.6" fill="#2E2A28"></circle><circle cx="921" cy="283" r="0.6" fill="#3A3530"></circle><circle cx="968" cy="169" r="0.7" fill="#4A4038"></circle><circle cx="745" cy="174" r="0.6" fill="#5A4A40"></circle><circle cx="762" cy="183" r="1.0" fill="#2E2A28"></circle><circle cx="939" cy="279" r="0.7" fill="#4A4038"></circle><circle cx="913" cy="205" r="0.7" fill="#4A4038"></circle><circle cx="1011" cy="316" r="0.5" fill="#3A3530"></circle><circle cx="901" cy="313" r="1.2" fill="#2E2A28"></circle><circle cx="900" cy="300" r="0.8" fill="#2E2A28"></circle><circle cx="872" cy="283" r="0.9" fill="#5A4A40"></circle><circle cx="843" cy="302" r="1.2" fill="#2E2A28"></circle><circle cx="894" cy="233" r="0.5" fill="#4A4038"></circle><circle cx="1059" cy="181" r="0.5" fill="#4A4038"></circle><circle cx="944" cy="253" r="1.0" fill="#4A4038"></circle><circle cx="846" cy="305" r="0.5" fill="#5A4A40"></circle><circle cx="814" cy="285" r="0.5" fill="#5A4A40"></circle><circle cx="919" cy="303" r="0.7" fill="#5A4A40"></circle><circle cx="1062" cy="206" r="1.0" fill="#5A4A40"></circle><circle cx="871" cy="188" r="1.0" fill="#4A4038"></circle><circle cx="946" cy="330" r="1.0" fill="#5A4A40"></circle><circle cx="898" cy="310" r="0.7" fill="#4A4038"></circle><circle cx="853" cy="238" r="1.0" fill="#2E2A28"></circle><circle cx="767" cy="314" r="0.5" fill="#5A4A40"></circle><circle cx="986" cy="271" r="1.2" fill="#2E2A28"></circle><circle cx="1009" cy="233" r="0.8" fill="#2E2A28"></circle><circle cx="1045" cy="267" r="0.6" fill="#3A3530"></circle><circle cx="1016" cy="323" r="0.7" fill="#3A3530"></circle><circle cx="817" cy="178" r="0.6" fill="#5A4A40"></circle><circle cx="1093" cy="283" r="1.2" fill="#4A4038"></circle><circle cx="759" cy="264" r="1.2" fill="#3A3530"></circle><circle cx="859" cy="216" r="0.5" fill="#5A4A40"></circle><circle cx="767" cy="280" r="0.6" fill="#3A3530"></circle><circle cx="1011" cy="282" r="0.6" fill="#2E2A28"></circle><circle cx="916" cy="328" r="0.7" fill="#4A4038"></circle><circle cx="881" cy="227" r="0.7" fill="#2E2A28"></circle><circle cx="918" cy="263" r="1.0" fill="#3A3530"></circle><circle cx="998" cy="329" r="0.8" fill="#5A4A40"></circle><circle cx="1051" cy="310" r="1.2" fill="#3A3530"></circle><circle cx="1064" cy="337" r="1.0" fill="#3A3530"></circle><circle cx="929" cy="293" r="1.2" fill="#3A3530"></circle><circle cx="891" cy="242" r="0.6" fill="#2E2A28"></circle><circle cx="1010" cy="343" r="0.8" fill="#2E2A28"></circle><circle cx="854" cy="236" r="0.9" fill="#5A4A40"></circle><circle cx="837" cy="324" r="0.8" fill="#5A4A40"></circle><circle cx="1006" cy="221" r="0.6" fill="#2E2A28"></circle><circle cx="1073" cy="301" r="0.5" fill="#4A4038"></circle><circle cx="1072" cy="174" r="0.5" fill="#2E2A28"></circle><circle cx="804" cy="206" r="0.6" fill="#4A4038"></circle><circle cx="956" cy="207" r="0.6" fill="#5A4A40"></circle><circle cx="884" cy="329" r="0.7" fill="#4A4038"></circle><circle cx="1051" cy="253" r="0.8" fill="#5A4A40"></circle><circle cx="980" cy="304" r="0.5" fill="#4A4038"></circle><circle cx="1055" cy="238" r="0.6" fill="#2E2A28"></circle><circle cx="1032" cy="236" r="0.9" fill="#5A4A40"></circle><circle cx="1027" cy="178" r="0.6" fill="#3A3530"></circle><circle cx="1059" cy="328" r="0.8" fill="#2E2A28"></circle><circle cx="999" cy="275" r="0.6" fill="#4A4038"></circle><circle cx="794" cy="224" r="0.7" fill="#2E2A28"></circle><circle cx="971" cy="343" r="0.7" fill="#3A3530"></circle><circle cx="791" cy="304" r="0.5" fill="#2E2A28"></circle><circle cx="1039" cy="317" r="1.2" fill="#2E2A28"></circle><circle cx="766" cy="215" r="1.0" fill="#3A3530"></circle><circle cx="1065" cy="290" r="0.5" fill="#5A4A40"></circle><circle cx="743" cy="201" r="0.6" fill="#3A3530"></circle><circle cx="1025" cy="245" r="0.5" fill="#4A4038"></circle><circle cx="930" cy="195" r="1.2" fill="#5A4A40"></circle><circle cx="852" cy="239" r="0.9" fill="#5A4A40"></circle><circle cx="1104" cy="286" r="0.5" fill="#5A4A40"></circle><circle cx="763" cy="192" r="1.0" fill="#4A4038"></circle><circle cx="986" cy="300" r="1.2" fill="#3A3530"></circle><circle cx="977" cy="170" r="0.8" fill="#4A4038"></circle><circle cx="823" cy="267" r="0.8" fill="#3A3530"></circle><circle cx="1052" cy="317" r="1.0" fill="#2E2A28"></circle><circle cx="1069" cy="194" r="1.0" fill="#4A4038"></circle><circle cx="1082" cy="300" r="0.7" fill="#4A4038"></circle><circle cx="941" cy="183" r="0.6" fill="#2E2A28"></circle><circle cx="875" cy="187" r="0.7" fill="#5A4A40"></circle><circle cx="944" cy="296" r="0.7" fill="#4A4038"></circle><circle cx="1041" cy="184" r="0.6" fill="#3A3530"></circle><circle cx="784" cy="279" r="0.6" fill="#2E2A28"></circle><circle cx="807" cy="174" r="0.8" fill="#3A3530"></circle><circle cx="773" cy="173" r="0.5" fill="#4A4038"></circle><circle cx="886" cy="180" r="1.2" fill="#4A4038"></circle><circle cx="1078" cy="192" r="0.6" fill="#2E2A28"></circle><circle cx="1039" cy="236" r="0.7" fill="#4A4038"></circle><circle cx="966" cy="296" r="0.9" fill="#5A4A40"></circle><circle cx="1099" cy="307" r="1.0" fill="#3A3530"></circle><circle cx="832" cy="201" r="0.7" fill="#4A4038"></circle><circle cx="775" cy="234" r="0.9" fill="#5A4A40"></circle><circle cx="1027" cy="314" r="0.9" fill="#2E2A28"></circle><circle cx="829" cy="263" r="0.7" fill="#2E2A28"></circle><circle cx="866" cy="256" r="0.6" fill="#2E2A28"></circle><circle cx="1101" cy="259" r="1.0" fill="#2E2A28"></circle><circle cx="945" cy="172" r="1.0" fill="#2E2A28"></circle><circle cx="1023" cy="192" r="0.8" fill="#4A4038"></circle><circle cx="993" cy="226" r="1.2" fill="#5A4A40"></circle><circle cx="834" cy="324" r="0.8" fill="#2E2A28"></circle><circle cx="824" cy="268" r="0.9" fill="#3A3530"></circle><circle cx="943" cy="214" r="1.0" fill="#5A4A40"></circle><circle cx="958" cy="189" r="1.2" fill="#3A3530"></circle><circle cx="842" cy="326" r="0.6" fill="#5A4A40"></circle><circle cx="1043" cy="200" r="0.9" fill="#3A3530"></circle><circle cx="904" cy="239" r="1.2" fill="#2E2A28"></circle><circle cx="849" cy="286" r="1.0" fill="#4A4038"></circle><circle cx="963" cy="281" r="1.2" fill="#3A3530"></circle><circle cx="794" cy="240" r="0.5" fill="#2E2A28"></circle><circle cx="931" cy="188" r="0.8" fill="#2E2A28"></circle><circle cx="860" cy="191" r="0.6" fill="#5A4A40"></circle><circle cx="755" cy="306" r="1.0" fill="#2E2A28"></circle><circle cx="885" cy="256" r="0.5" fill="#4A4038"></circle><circle cx="863" cy="326" r="1.0" fill="#4A4038"></circle><circle cx="1014" cy="253" r="0.8" fill="#4A4038"></circle><circle cx="1041" cy="188" r="0.5" fill="#5A4A40"></circle><circle cx="930" cy="244" r="0.5" fill="#5A4A40"></circle><circle cx="1071" cy="220" r="0.9" fill="#4A4038"></circle><circle cx="1006" cy="273" r="1.2" fill="#5A4A40"></circle><circle cx="1062" cy="323" r="0.6" fill="#3A3530"></circle><circle cx="1048" cy="210" r="1.2" fill="#4A4038"></circle><circle cx="1095" cy="252" r="0.5" fill="#2E2A28"></circle><circle cx="937" cy="284" r="0.6" fill="#3A3530"></circle><circle cx="1105" cy="297" r="1.2" fill="#5A4A40"></circle><circle cx="1056" cy="242" r="1.2" fill="#2E2A28"></circle><circle cx="818" cy="300" r="0.9" fill="#3A3530"></circle><circle cx="1070" cy="185" r="1.2" fill="#2E2A28"></circle><circle cx="781" cy="263" r="0.8" fill="#3A3530"></circle><circle cx="845" cy="296" r="0.5" fill="#5A4A40"></circle><circle cx="799" cy="246" r="0.8" fill="#4A4038"></circle><circle cx="788" cy="290" r="0.6" fill="#3A3530"></circle><circle cx="849" cy="248" r="0.7" fill="#5A4A40"></circle><circle cx="856" cy="193" r="1.2" fill="#4A4038"></circle><circle cx="1061" cy="203" r="1.2" fill="#3A3530"></circle><circle cx="808" cy="316" r="0.7" fill="#4A4038"></circle><circle cx="741" cy="280" r="1.0" fill="#2E2A28"></circle><circle cx="933" cy="209" r="0.5" fill="#3A3530"></circle><circle cx="849" cy="312" r="0.7" fill="#4A4038"></circle><circle cx="999" cy="191" r="1.0" fill="#4A4038"></circle><circle cx="889" cy="197" r="1.2" fill="#5A4A40"></circle><circle cx="780" cy="290" r="0.7" fill="#2E2A28"></circle><circle cx="1002" cy="256" r="0.7" fill="#5A4A40"></circle><circle cx="873" cy="285" r="0.5" fill="#2E2A28"></circle><circle cx="1097" cy="326" r="0.6" fill="#2E2A28"></circle><circle cx="838" cy="281" r="0.5" fill="#4A4038"></circle><circle cx="1099" cy="245" r="0.9" fill="#3A3530"></circle><circle cx="932" cy="176" r="0.9" fill="#5A4A40"></circle><circle cx="934" cy="242" r="0.9" fill="#3A3530"></circle><circle cx="796" cy="342" r="0.6" fill="#2E2A28"></circle><circle cx="802" cy="297" r="0.5" fill="#2E2A28"></circle><circle cx="1028" cy="194" r="0.5" fill="#4A4038"></circle><circle cx="1075" cy="271" r="0.5" fill="#4A4038"></circle><circle cx="758" cy="179" r="1.2" fill="#5A4A40"></circle><circle cx="854" cy="253" r="0.5" fill="#5A4A40"></circle><circle cx="923" cy="317" r="1.0" fill="#2E2A28"></circle><circle cx="955" cy="304" r="0.5" fill="#4A4038"></circle><circle cx="823" cy="245" r="1.2" fill="#5A4A40"></circle><circle cx="1027" cy="308" r="0.6" fill="#5A4A40"></circle><circle cx="916" cy="207" r="0.9" fill="#4A4038"></circle><circle cx="832" cy="203" r="1.0" fill="#3A3530"></circle><circle cx="947" cy="322" r="0.6" fill="#5A4A40"></circle><circle cx="792" cy="171" r="0.8" fill="#4A4038"></circle><circle cx="922" cy="295" r="1.2" fill="#3A3530"></circle><circle cx="762" cy="328" r="0.9" fill="#2E2A28"></circle><circle cx="966" cy="177" r="0.8" fill="#3A3530"></circle><circle cx="993" cy="313" r="1.0" fill="#5A4A40"></circle><circle cx="1019" cy="256" r="1.0" fill="#2E2A28"></circle><circle cx="876" cy="211" r="0.8" fill="#4A4038"></circle><circle cx="758" cy="240" r="0.7" fill="#2E2A28"></circle><circle cx="996" cy="337" r="0.6" fill="#4A4038"></circle><circle cx="1015" cy="274" r="0.6" fill="#2E2A28"></circle><circle cx="1011" cy="260" r="0.5" fill="#3A3530"></circle><circle cx="825" cy="325" r="0.6" fill="#3A3530"></circle><circle cx="881" cy="220" r="0.8" fill="#3A3530"></circle><circle cx="1095" cy="288" r="1.0" fill="#2E2A28"></circle><circle cx="845" cy="189" r="1.2" fill="#2E2A28"></circle><circle cx="890" cy="183" r="0.6" fill="#5A4A40"></circle><circle cx="850" cy="335" r="0.9" fill="#2E2A28"></circle><circle cx="750" cy="239" r="1.0" fill="#3A3530"></circle><circle cx="1008" cy="268" r="1.2" fill="#2E2A28"></circle><circle cx="907" cy="237" r="1.2" fill="#2E2A28"></circle><circle cx="877" cy="306" r="0.6" fill="#4A4038"></circle><circle cx="864" cy="200" r="0.9" fill="#2E2A28"></circle><circle cx="913" cy="238" r="0.9" fill="#4A4038"></circle><circle cx="1017" cy="251" r="0.8" fill="#2E2A28"></circle><circle cx="1055" cy="204" r="0.8" fill="#4A4038"></circle><circle cx="762" cy="290" r="0.7" fill="#5A4A40"></circle><circle cx="965" cy="259" r="1.0" fill="#5A4A40"></circle><circle cx="925" cy="268" r="1.0" fill="#2E2A28"></circle><circle cx="835" cy="231" r="0.6" fill="#5A4A40"></circle><circle cx="786" cy="210" r="1.2" fill="#3A3530"></circle><circle cx="743" cy="225" r="0.8" fill="#4A4038"></circle><circle cx="766" cy="324" r="0.7" fill="#5A4A40"></circle><circle cx="1021" cy="259" r="0.5" fill="#5A4A40"></circle><circle cx="881" cy="210" r="0.5" fill="#2E2A28"></circle><circle cx="791" cy="273" r="0.5" fill="#2E2A28"></circle><circle cx="851" cy="243" r="0.9" fill="#2E2A28"></circle><circle cx="927" cy="265" r="0.7" fill="#4A4038"></circle><circle cx="982" cy="194" r="0.6" fill="#5A4A40"></circle><circle cx="933" cy="247" r="0.6" fill="#4A4038"></circle><circle cx="927" cy="230" r="0.5" fill="#5A4A40"></circle><circle cx="873" cy="276" r="0.6" fill="#3A3530"></circle><circle cx="1049" cy="300" r="0.8" fill="#3A3530"></circle><circle cx="1035" cy="340" r="0.7" fill="#3A3530"></circle><circle cx="1076" cy="206" r="1.0" fill="#5A4A40"></circle><circle cx="982" cy="337" r="1.2" fill="#5A4A40"></circle><circle cx="822" cy="279" r="0.5" fill="#4A4038"></circle><circle cx="780" cy="255" r="0.8" fill="#4A4038"></circle><circle cx="1080" cy="218" r="1.0" fill="#5A4A40"></circle><circle cx="818" cy="331" r="0.6" fill="#4A4038"></circle><circle cx="1020" cy="230" r="1.0" fill="#2E2A28"></circle><circle cx="928" cy="299" r="0.8" fill="#2E2A28"></circle><circle cx="912" cy="213" r="1.2" fill="#5A4A40"></circle><circle cx="995" cy="172" r="0.8" fill="#3A3530"></circle><circle cx="870" cy="179" r="0.8" fill="#5A4A40"></circle><circle cx="756" cy="255" r="0.9" fill="#5A4A40"></circle><circle cx="909" cy="225" r="0.7" fill="#3A3530"></circle><circle cx="744" cy="229" r="0.7" fill="#5A4A40"></circle><circle cx="832" cy="286" r="0.6" fill="#4A4038"></circle><circle cx="878" cy="228" r="0.7" fill="#3A3530"></circle><circle cx="949" cy="334" r="1.2" fill="#3A3530"></circle><circle cx="968" cy="277" r="0.8" fill="#4A4038"></circle><circle cx="759" cy="180" r="0.8" fill="#4A4038"></circle><circle cx="877" cy="329" r="0.5" fill="#2E2A28"></circle><circle cx="988" cy="216" r="0.8" fill="#5A4A40"></circle><circle cx="911" cy="171" r="0.9" fill="#2E2A28"></circle><circle cx="835" cy="213" r="0.6" fill="#2E2A28"></circle><circle cx="928" cy="331" r="0.8" fill="#3A3530"></circle><circle cx="824" cy="255" r="1.0" fill="#3A3530"></circle><circle cx="967" cy="267" r="1.2" fill="#5A4A40"></circle><circle cx="833" cy="186" r="0.5" fill="#5A4A40"></circle><circle cx="1034" cy="204" r="0.8" fill="#2E2A28"></circle><circle cx="1092" cy="313" r="0.6" fill="#5A4A40"></circle><circle cx="965" cy="254" r="0.9" fill="#5A4A40"></circle><circle cx="872" cy="218" r="1.0" fill="#4A4038"></circle><circle cx="823" cy="212" r="0.7" fill="#2E2A28"></circle><circle cx="1075" cy="298" r="0.5" fill="#3A3530"></circle><circle cx="1038" cy="324" r="0.7" fill="#3A3530"></circle><circle cx="1050" cy="258" r="1.0" fill="#4A4038"></circle><circle cx="750" cy="278" r="0.8" fill="#4A4038"></circle><circle cx="755" cy="212" r="0.9" fill="#4A4038"></circle><circle cx="829" cy="280" r="0.7" fill="#5A4A40"></circle><circle cx="803" cy="319" r="0.6" fill="#2E2A28"></circle><circle cx="945" cy="242" r="1.0" fill="#2E2A28"></circle><circle cx="966" cy="315" r="1.2" fill="#2E2A28"></circle><circle cx="782" cy="234" r="1.0" fill="#5A4A40"></circle><circle cx="821" cy="200" r="0.5" fill="#4A4038"></circle><circle cx="952" cy="334" r="0.6" fill="#5A4A40"></circle><circle cx="990" cy="242" r="1.0" fill="#4A4038"></circle><circle cx="879" cy="288" r="0.6" fill="#3A3530"></circle><ellipse cx="768" cy="240" rx="2.5" ry="4.0" fill="#4A3028"></ellipse><ellipse cx="895" cy="213" rx="3.0" ry="2.0" fill="#4A3028"></ellipse><ellipse cx="1070" cy="195" rx="3.0" ry="2.0" fill="#4A3028"></ellipse><ellipse cx="1060" cy="245" rx="3.0" ry="2.5" fill="#4A3028"></ellipse><ellipse cx="820" cy="290" rx="2.0" ry="3.0" fill="#4A3028"></ellipse>
 </g>
 <!-- PHOTO 2: soldiers -->
 <g clip-path="url(#c2)">
  <rect x="339" y="398" width="474" height="194" fill="url(#g2)"></rect>
  <g filter="url(#bl3)">
   <path d="M339 555 C370 550 410 555 440 565 L 440 580 L339 580z" fill="#4E463A"></path>
   <path d="M339 578 L812 578 L812 592 L339 592z" fill="#A9A8A2"></path>
   <path d="M470 568 C560 565 700 570 812 575 L812 582 L470 582z" fill="#7C7A52" opacity="0.7"></path>
  </g>
  <g filter="url(#camo)" id="sold"><path d="M619.0 470.0 L651.0 470.0 L650.0 514.0 L637.0 514.0 L635.5 482.5 L634.5 482.5 L633.0 514.0 L620.0 514.0 z" fill="#7C7257"></path><rect x="621.0" y="486.0" width="12.5" height="10.0" rx="4" fill="#3E5240"></rect><rect x="636.5" y="486.0" width="12.5" height="10.0" rx="4" fill="#3E5240"></rect><rect x="619.0" y="512.0" width="15.0" height="8.0" rx="2" fill="#332E28"></rect><rect x="636.0" y="512.0" width="15.0" height="8.0" rx="2" fill="#332E28"></rect><path d="M606.0 453.8 C606.0 418.0 617.2 416.0 625.6 416.0 L642.4 416.0 C650.8 416.0 662.0 418.0 662.0 453.8 L653.0 470.0 L615.0 470.0 z" fill="#7E7458"></path><rect x="620.0" y="421.0" width="28.0" height="33.9" rx="3" fill="#4C4836"></rect><ellipse cx="626" cy="421" rx="6" ry="7.56" fill="#B89880"></ellipse><ellipse cx="626" cy="409" rx="10" ry="9" fill="#8E8464"></ellipse><path d="M751.0 500.0 L773.0 500.0 L772.0 559.0 L764.0 559.0 L762.5 516.2 L761.5 516.2 L760.0 559.0 L752.0 559.0 z" fill="#7C7257"></path><rect x="753.0" y="520.8" width="7.5" height="13.0" rx="4" fill="#3E5240"></rect><rect x="763.5" y="520.8" width="7.5" height="13.0" rx="4" fill="#3E5240"></rect><rect x="751.0" y="557.0" width="10.0" height="8.0" rx="2" fill="#332E28"></rect><rect x="763.0" y="557.0" width="10.0" height="8.0" rx="2" fill="#332E28"></rect><path d="M746.0 480.8 C746.0 438.0 752.4 436.0 757.2 436.0 L766.8 436.0 C771.6 436.0 778.0 438.0 778.0 480.8 L772.9 500.0 L751.1 500.0 z" fill="#7E7458"></path><rect x="754.0" y="441.0" width="16.0" height="41.1" rx="3" fill="#4C4836"></rect><ellipse cx="759" cy="440" rx="4.8" ry="6.3" fill="#B89880"></ellipse><ellipse cx="759" cy="429.5" rx="8" ry="7.5" fill="#8E8464"></ellipse><path d="M515.0 480.0 L537.0 480.0 L536.0 514.0 L528.0 514.0 L526.5 490.0 L525.5 490.0 L524.0 514.0 L516.0 514.0 z" fill="#7C7257"></path><rect x="517.0" y="492.8" width="7.5" height="8.0" rx="4" fill="#3E5240"></rect><rect x="527.5" y="492.8" width="7.5" height="8.0" rx="4" fill="#3E5240"></rect><rect x="515.0" y="512.0" width="10.0" height="8.0" rx="2" fill="#332E28"></rect><rect x="527.0" y="512.0" width="10.0" height="8.0" rx="2" fill="#332E28"></rect><path d="M510.0 462.9 C510.0 425.0 516.4 423.0 521.2 423.0 L530.8 423.0 C535.6 423.0 542.0 425.0 542.0 462.9 L536.9 480.0 L515.1 480.0 z" fill="#7E7458"></path><rect x="518.0" y="428.0" width="16.0" height="36.0" rx="3" fill="#4C4836"></rect><ellipse cx="525.5" cy="427" rx="5.1" ry="7.56" fill="#B89880"></ellipse><ellipse cx="525.5" cy="415" rx="8.5" ry="9" fill="#55603A"></ellipse><path d="M340.0 470.0 L363.0 470.0 L362.0 542.0 L353.5 542.0 L352.0 489.5 L351.0 489.5 L349.5 542.0 L341.0 542.0 z" fill="#7C7257"></path><rect x="342.0" y="495.0" width="8.0" height="15.6" rx="4" fill="#3E5240"></rect><rect x="353.0" y="495.0" width="8.0" height="15.6" rx="4" fill="#3E5240"></rect><rect x="340.0" y="540.0" width="10.5" height="8.0" rx="2" fill="#332E28"></rect><rect x="352.5" y="540.0" width="10.5" height="8.0" rx="2" fill="#332E28"></rect><path d="M336.0 452.6 C336.0 414.0 344.8 412.0 351.4 412.0 L364.6 412.0 C371.2 412.0 380.0 414.0 380.0 452.6 L373.0 470.0 L343.0 470.0 z" fill="#7E7458"></path><rect x="347.0" y="417.0" width="22.0" height="36.8" rx="3" fill="#4C4836"></rect><ellipse cx="353.5" cy="442" rx="8.5" ry="10" fill="#988E6E"></ellipse><ellipse cx="346" cy="415" rx="3.6" ry="5.46" fill="#B89880"></ellipse><ellipse cx="346" cy="405.5" rx="6" ry="6.5" fill="#55603A"></ellipse><path d="M382.0 486.0 L422.0 486.0 L421.0 544.0 L404.0 544.0 L402.5 502.0 L401.5 502.0 L400.0 544.0 L383.0 544.0 z" fill="#7C7257"></path><rect x="384.0" y="506.5" width="16.5" height="12.8" rx="4" fill="#3E5240"></rect><rect x="403.5" y="506.5" width="16.5" height="12.8" rx="4" fill="#3E5240"></rect><rect x="382.0" y="542.0" width="19.0" height="8.0" rx="2" fill="#332E28"></rect><rect x="403.0" y="542.0" width="19.0" height="8.0" rx="2" fill="#332E28"></rect><path d="M369.0 466.5 C369.0 423.0 380.2 421.0 388.6 421.0 L405.4 421.0 C413.8 421.0 425.0 423.0 425.0 466.5 L416.0 486.0 L378.0 486.0 z" fill="#7E7458"></path><rect x="383.0" y="425.0" width="32.0" height="45.0" rx="3" fill="#4F5A42"></rect><ellipse cx="401.5" cy="456.5" rx="9.5" ry="11.5" fill="#988E6E"></ellipse><ellipse cx="398" cy="423" rx="4.2" ry="6.72" fill="#B89880"></ellipse><ellipse cx="398" cy="412" rx="7" ry="8" fill="#55603A"></ellipse><path d="M435.0 513.0 L463.0 513.0 L462.0 580.0 L451.0 580.0 L449.5 531.2 L448.5 531.2 L447.0 580.0 L436.0 580.0 z" fill="#7C7257"></path><rect x="437.0" y="536.4" width="10.5" height="14.6" rx="4" fill="#3E5240"></rect><rect x="450.5" y="536.4" width="10.5" height="14.6" rx="4" fill="#3E5240"></rect><rect x="435.0" y="578.0" width="13.0" height="8.0" rx="2" fill="#332E28"></rect><rect x="450.0" y="578.0" width="13.0" height="8.0" rx="2" fill="#332E28"></rect><path d="M431.0 487.8 C431.0 431.0 439.4 429.0 445.7 429.0 L458.3 429.0 C464.6 429.0 473.0 431.0 473.0 487.8 L466.3 513.0 L437.7 513.0 z" fill="#7E7458"></path><rect x="441.5" y="434.0" width="21.0" height="55.5" rx="3" fill="#4C4836"></rect><path d="M430 440 L432 525" stroke="#2E2A26" stroke-width="3.5"></path><ellipse cx="462.5" cy="435" rx="6.9" ry="8.4" fill="#B89880"></ellipse><ellipse cx="462.5" cy="422" rx="11.5" ry="10" fill="#8E8464"></ellipse><path d="M480.0 513.0 L512.0 513.0 L511.0 584.0 L498.0 584.0 L496.5 532.2 L495.5 532.2 L494.0 584.0 L481.0 584.0 z" fill="#7C7257"></path><rect x="482.0" y="537.6" width="12.5" height="15.4" rx="4" fill="#3E5240"></rect><rect x="497.5" y="537.6" width="12.5" height="15.4" rx="4" fill="#3E5240"></rect><rect x="480.0" y="582.0" width="15.0" height="8.0" rx="2" fill="#332E28"></rect><rect x="497.0" y="582.0" width="15.0" height="8.0" rx="2" fill="#332E28"></rect><path d="M465.0 487.2 C465.0 429.0 478.0 427.0 487.8 427.0 L507.2 427.0 C517.0 427.0 530.0 429.0 530.0 487.2 L519.6 513.0 L475.4 513.0 z" fill="#7E7458"></path><rect x="481.2" y="432.0" width="32.5" height="56.9" rx="3" fill="#4C4836"></rect><path d="M485 430 L525 510" stroke="#2E2A26" stroke-width="3.5"></path><ellipse cx="496.5" cy="432" rx="6.9" ry="9.24" fill="#B89880"></ellipse><ellipse cx="496.5" cy="418" rx="11.5" ry="11" fill="#8E8464"></ellipse><path d="M526.0 507.0 L563.0 507.0 L562.0 568.0 L546.5 568.0 L545.0 523.8 L544.0 523.8 L542.5 568.0 L527.0 568.0 z" fill="#7C7257"></path><rect x="528.0" y="528.4" width="15.0" height="13.4" rx="4" fill="#3E5240"></rect><rect x="546.0" y="528.4" width="15.0" height="13.4" rx="4" fill="#3E5240"></rect><rect x="526.0" y="566.0" width="17.5" height="8.0" rx="2" fill="#332E28"></rect><rect x="545.5" y="566.0" width="17.5" height="8.0" rx="2" fill="#332E28"></rect><path d="M522.0 483.0 C522.0 429.0 531.6 427.0 538.8 427.0 L553.2 427.0 C560.4 427.0 570.0 429.0 570.0 483.0 L562.3 507.0 L529.7 507.0 z" fill="#7E7458"></path><rect x="534.0" y="432.0" width="24.0" height="52.6" rx="3" fill="#4C4836"></rect><path d="M525 450 L560 505" stroke="#2E2A26" stroke-width="3.5"></path><ellipse cx="543.5" cy="432" rx="5.7" ry="8.4" fill="#B89880"></ellipse><ellipse cx="543.5" cy="419" rx="9.5" ry="10" fill="#8E8464"></ellipse><path d="M578.0 519.0 L615.0 519.0 L614.0 576.0 L598.5 576.0 L597.0 534.8 L596.0 534.8 L594.5 576.0 L579.0 576.0 z" fill="#7C7257"></path><rect x="580.0" y="539.2" width="15.0" height="12.6" rx="4" fill="#3E5240"></rect><rect x="598.0" y="539.2" width="15.0" height="12.6" rx="4" fill="#3E5240"></rect><rect x="578.0" y="574.0" width="17.5" height="8.0" rx="2" fill="#332E28"></rect><rect x="597.5" y="574.0" width="17.5" height="8.0" rx="2" fill="#332E28"></rect><path d="M574.0 493.2 C574.0 435.0 584.8 433.0 592.9 433.0 L609.1 433.0 C617.2 433.0 628.0 435.0 628.0 493.2 L619.4 519.0 L582.6 519.0 z" fill="#7E7458"></path><rect x="587.5" y="438.0" width="27.0" height="56.9" rx="3" fill="#4C4836"></rect><path d="M578 460 L610 520" stroke="#2E2A26" stroke-width="3.5"></path><ellipse cx="594" cy="439" rx="8.4" ry="7.98" fill="#B89880"></ellipse><ellipse cx="594" cy="426.5" rx="14" ry="9.5" fill="#8E8464"></ellipse><path d="M627.0 513.0 L655.0 513.0 L654.0 573.0 L643.0 573.0 L641.5 529.5 L640.5 529.5 L639.0 573.0 L628.0 573.0 z" fill="#7C7257"></path><rect x="629.0" y="534.1" width="10.5" height="13.2" rx="4" fill="#3E5240"></rect><rect x="642.5" y="534.1" width="10.5" height="13.2" rx="4" fill="#3E5240"></rect><rect x="627.0" y="571.0" width="13.0" height="8.0" rx="2" fill="#332E28"></rect><rect x="642.0" y="571.0" width="13.0" height="8.0" rx="2" fill="#332E28"></rect><path d="M622.0 490.2 C622.0 439.0 631.6 437.0 638.8 437.0 L653.2 437.0 C660.4 437.0 670.0 439.0 670.0 490.2 L662.3 513.0 L629.7 513.0 z" fill="#7E7458"></path><rect x="634.0" y="442.0" width="24.0" height="49.7" rx="3" fill="#4C4836"></rect><ellipse cx="651" cy="489" rx="11" ry="11" fill="#988E6E"></ellipse><ellipse cx="646" cy="441" rx="4.8" ry="7.14" fill="#B89880"></ellipse><ellipse cx="646" cy="429.5" rx="8" ry="8.5" fill="#55603A"></ellipse><path d="M688.0 501.0 L715.0 501.0 L714.0 562.0 L703.5 562.0 L702.0 517.8 L701.0 517.8 L699.5 562.0 L689.0 562.0 z" fill="#7C7257"></path><rect x="690.0" y="522.4" width="10.0" height="13.4" rx="4" fill="#3E5240"></rect><rect x="703.0" y="522.4" width="10.0" height="13.4" rx="4" fill="#3E5240"></rect><rect x="688.0" y="560.0" width="12.5" height="8.0" rx="2" fill="#332E28"></rect><rect x="702.5" y="560.0" width="12.5" height="8.0" rx="2" fill="#332E28"></rect><path d="M685.0 481.5 C685.0 438.0 694.0 436.0 700.8 436.0 L714.2 436.0 C721.0 436.0 730.0 438.0 730.0 481.5 L722.8 501.0 L692.2 501.0 z" fill="#7E7458"></path><rect x="696.2" y="441.0" width="22.5" height="41.8" rx="3" fill="#4C4836"></rect><ellipse cx="717" cy="469" rx="10" ry="11" fill="#988E6E"></ellipse><ellipse cx="712.5" cy="442" rx="4.5" ry="6.3" fill="#B89880"></ellipse><ellipse cx="712.5" cy="431.5" rx="7.5" ry="7.5" fill="#55603A"></ellipse><path d="M734.0 513.0 L761.0 513.0 L760.0 584.0 L749.5 584.0 L748.0 532.2 L747.0 532.2 L745.5 584.0 L735.0 584.0 z" fill="#7C7257"></path><rect x="736.0" y="537.6" width="10.0" height="15.4" rx="4" fill="#3E5240"></rect><rect x="749.0" y="537.6" width="10.0" height="15.4" rx="4" fill="#3E5240"></rect><rect x="734.0" y="582.0" width="12.5" height="8.0" rx="2" fill="#332E28"></rect><rect x="748.5" y="582.0" width="12.5" height="8.0" rx="2" fill="#332E28"></rect><path d="M729.0 493.2 C729.0 449.0 736.2 447.0 741.6 447.0 L752.4 447.0 C757.8 447.0 765.0 449.0 765.0 493.2 L759.2 513.0 L734.8 513.0 z" fill="#7E7458"></path><rect x="738.0" y="452.0" width="18.0" height="42.5" rx="3" fill="#4C4836"></rect><ellipse cx="741" cy="449" rx="6" ry="8.82" fill="#B89880"></ellipse><ellipse cx="741" cy="435.5" rx="10" ry="10.5" fill="#3E444A"></ellipse><path d="M771.0 519.0 L807.0 519.0 L806.0 584.0 L791.0 584.0 L789.5 536.8 L788.5 536.8 L787.0 584.0 L772.0 584.0 z" fill="#7C7257"></path><rect x="773.0" y="541.7" width="14.5" height="14.2" rx="4" fill="#3E5240"></rect><rect x="790.5" y="541.7" width="14.5" height="14.2" rx="4" fill="#3E5240"></rect><rect x="771.0" y="582.0" width="17.0" height="8.0" rx="2" fill="#332E28"></rect><rect x="790.0" y="582.0" width="17.0" height="8.0" rx="2" fill="#332E28"></rect><path d="M758.0 495.6 C758.0 443.0 768.8 441.0 776.9 441.0 L793.1 441.0 C801.2 441.0 812.0 443.0 812.0 495.6 L803.4 519.0 L766.6 519.0 z" fill="#7E7458"></path><rect x="771.5" y="446.0" width="27.0" height="51.2" rx="3" fill="#4C4836"></rect><ellipse cx="796" cy="492.5" rx="13" ry="14.5" fill="#988E6E"></ellipse><ellipse cx="789.5" cy="445" rx="5.7" ry="9.66" fill="#B89880"></ellipse><ellipse cx="789.5" cy="430.5" rx="9.5" ry="11.5" fill="#55603A"></ellipse></g>
 </g>
 <!-- PHOTO 3: city -->
 <g clip-path="url(#c3)">
  <rect x="828" y="398" width="300" height="200" fill="url(#g3)"></rect>
  <g filter="url(#bl6)">
   <ellipse cx="1060" cy="408" rx="55" ry="6" fill="#D0DCE8" opacity="0.8"></ellipse>
   <ellipse cx="1085" cy="425" rx="50" ry="9" fill="#C8D6E4" opacity="0.9"></ellipse>
   <ellipse cx="1105" cy="440" rx="35" ry="6" fill="#BCCCDC" opacity="0.8"></ellipse>
  </g>
  <g filter="url(#bl1)">
   <path d="M828 485 L1127 480 L1127 597 L828 597z" fill="#757069"></path>
   <path d="M828 545 L1127 535 L1127 597 L828 597z" fill="#5F5852"></path>
   <path d="M828 478 L850 470 L880 478 L930 482 L1002 488 L1127 490 L1127 512 L828 512z" fill="#7A7670"></path>
  </g>
  <path d="M828 495 L1127 490 L1127 597 L828 597z" fill="#000" filter="url(#rubble)" opacity="0.45"></path>
  <path d="M828 505 L1127 500 L1127 597 L828 597z" fill="#000" filter="url(#dark)" opacity="0.5"></path>
  <g filter="url(#bl1)">
   <path d="M863 417 L876 421 L882 497 L866 499z" fill="#C9C7C0"></path>
   <path d="M853 432 L866 428 L866 500 L855 500z" fill="#8C8882"></path>
   <path d="M876 455 L 912 478 L 905 500 L876 500z" fill="#6A625C"></path>
   <path d="M910 452 L913 452 L913 480 L910 480z" fill="#777"></path>
   <path d="M930 442 L 968 434 L1002 443 L1000 452 L 935 452z" fill="#6A6662"></path>
   <path d="M933 450 h4 v40 h-4z M968 448 h5 v45 h-5z M995 450 h5 v45 h-5z" fill="#8A8680"></path>
   <path d="M1002 450 L1030 447 L1060 444 L1095 452 L1127 454 L1127 502 L1002 502z" fill="#5A5856"></path>
   <path d="M1008 455 L1035 452 L1036 495 L1008 495z" fill="#9C988F"></path>
   <path d="M1040 458 h10 v35 h-10z M1060 460 h13 v35 h-13z M1083 462 h10 v35 h-10z M1103 462 h12 v35 h-12z" fill="#3E3C3A"></path>
   <path d="M1050 456 h6 v42 h-6z M1075 458 h5 v42 h-5z M1095 460 h5 v40 h-5z M1118 460 h4 v40 h-4z" fill="#9A9892"></path>
   <path d="M1002 470 L1127 472 L1127 478 L1002 476z" fill="#8A8680"></path>
   <ellipse cx="979" cy="484" rx="10" ry="20" fill="#2C372C"></ellipse>
   <path d="M837 522 C 848 506 870 496 898 486 L 970 484 L 986 505 L 988 530 L 930 542 L 840 545z" fill="#3A3836"></path><path d="M860 515 L 900 505 L 960 505 L 975 520 L 930 530 L 860 532z" fill="#5A5652" opacity="0.6"></path>
   <path d="M905 490 L 940 488 L 942 505 L 905 508z M948 490 L 965 490 L 970 503 L 948 503z" fill="#2A2A2A"></path>
   <circle cx="852" cy="531" r="10" fill="#222"></circle>
   <circle cx="945" cy="534" r="11" fill="#222"></circle>
  </g>
  <g filter="url(#camo)">
   <path d="M1010 495 L1038 490 L1044 540 L1040 588 L1030 588 L1026 552 L1020 588 L1012 588 L1009 540z" fill="#4E6244"></path>
   <path d="M1036 500 L1070 500 L1088 502 L1086 510 L1045 515z" fill="#4E6244"></path>
  </g>
  <g filter="url(#bl1)">
   <circle cx="1030" cy="484" r="5.5" fill="#A88470"></circle>
   <ellipse cx="1030" cy="477" rx="7" ry="3.5" fill="#3F6AA8"></ellipse>
   <path d="M1013 525 C1040 520 1065 512 1088 502 L 1085 512 C 1070 520 1045 533 1020 538z" fill="#DDBE2E"></path>
   <path d="M1020 538 C1045 533 1070 520 1085 512 L 1073 528 L1068 545 L1052 540 L1035 562z" fill="#2F5EA6"></path>
  </g>
 </g>
 <!-- spell underline -->
 <path d="M607 211.5 l2 -1.5 2 1.5 2 -1.5 2 1.5 2 -1.5 2 1.5 2 -1.5 2 1.5 2 -1.5 2 1.5 2 -1.5 2 1.5 2 -1.5 2 1.5 2 -1.5 2 1.5 2 -1.5 2 1.5 2 -1.5 2 1.5 2 -1.5 2 1.5 2 -1.5 2 1.5 2 -1.5 2 1.5 2 -1.5 2 1.5 2 -1.5 2 1.5 2 -1.5 2 1.5" fill="none" stroke="#E04848" stroke-width="0.9"></path>
</svg>


<div class="a" style="left:279px;top:625px;width:1001px;height:1px;background:#D0D0D0"></div>
<!-- SLIDE THUMBNAILS PANEL -->
<div class="a" style="left:27px;top:144px;width:136px;height:60px;background:#fff;box-shadow:0 0 1px rgba(0,0,0,.25)"></div>
<div class="t" style="left: 5px; top: 221.5px; font-size: 15px; color: rgb(85, 85, 85); transform: scaleX(0.8989); transform-origin: 0px 50%;">12</div>
<div class="a" style="left:27px;top:225px;width:136px;height:76.5px;background:#fff;box-shadow:0 0 1px rgba(0,0,0,.25)">
 <svg class="a" style="left:0;top:0" width="136" height="77"><g stroke="#9A9A9A" stroke-width="0.7"><path d="M8 6h12M8 9h14M8 12h14M8 15h13M8 18h14M8 21h12M8 24h14M8 27h13M8 30h10M8 33h14M8 36h13M8 39h10M8 42h12"></path></g><rect x="13" y="52" width="8" height="22" fill="#D8D8D8"></rect><rect x="13" y="64" width="8" height="10" fill="#8A8A8A"></rect><path d="M3 5l2 2 3-4" stroke="#888" fill="none" stroke-width="0.6"></path></svg>
</div>
<div class="t" style="left: 5px; top: 318.5px; font-size: 15px; color: rgb(85, 85, 85); transform: scaleX(0.8989); transform-origin: 0px 50%;">13</div>
<div class="a" style="left:27px;top:322px;width:136px;height:76.5px;background:#fff;box-shadow:0 0 1px rgba(0,0,0,.25)">
 <svg class="a" style="left:0;top:0" width="136" height="77"><g stroke="#2D4A78" stroke-width="1.1"><path d="M8 7h14M8 10h14M8 13h13M8 16h14"></path></g><path d="M3 6l2 2 3-4" stroke="#888" fill="none" stroke-width="0.6"></path></svg>
</div>
<div class="t" style="left: 5px; top: 415.5px; font-size: 15px; color: rgb(85, 85, 85); transform: scaleX(0.8989); transform-origin: 0px 50%;">14</div>
<div class="a" style="left:27px;top:420px;width:136px;height:76px;background:#fff;box-shadow:0 0 1px rgba(0,0,0,.25);overflow:hidden">
 <svg class="a" style="left:0;top:0" width="136" height="77"><g stroke="#2D4A78" stroke-width="1.1"><path d="M6 6h14M10 9h10M14 12h6M6 15h14"></path></g><rect x="0" y="38" width="136" height="40" fill="#1C2A32"></rect><ellipse cx="15" cy="55" rx="12" ry="8" fill="#3A5560" opacity="0.8"></ellipse></svg>
</div>
<div class="t" style="left: 5px; top: 512.5px; font-size: 15px; color: rgb(210, 71, 38); transform: scaleX(0.8989); transform-origin: 0px 50%;">15</div>
<div class="a" style="left:25px;top:514px;width:140px;height:81px;border:2px solid #E0785C;background:#fff">
 <svg class="a" style="left:1px;top:1px" width="134" height="77"><g stroke="#2D4A78" stroke-width="1.1"><path d="M4 6h16M4 10h16M4 14h16M4 18h16M4 22h16M4 26h12"></path></g><rect x="6" y="34" width="14" height="36" fill="#8A7A60"></rect><rect x="6" y="60" width="14" height="10" fill="#B0A080"></rect></svg>
</div>
<div class="t" style="left: 5px; top: 610.5px; font-size: 15px; color: rgb(85, 85, 85); transform: scaleX(0.8989); transform-origin: 0px 50%;">16</div>
<div class="a" style="left:28px;top:614.5px;width:135px;height:43px;background:#121416;overflow:hidden">
 <svg class="a" style="left:0;top:0" width="135" height="43"><rect x="0" y="2" width="135" height="13" fill="#1E3558"></rect><g stroke="#D8E4F4" stroke-width="1.6"><path d="M3 6h16M3 10h16"></path></g><rect x="0" y="15" width="135" height="15" fill="#D6C46A"></rect><g fill="#EEE8C0"><ellipse cx="40" cy="38" rx="8" ry="4"></ellipse><ellipse cx="90" cy="37" rx="6" ry="4"></ellipse></g><g fill="#D8C24A"><path d="M5 30l12 2-3 11-9-2z"></path><path d="M95 30l14 3-5 9-8-3z"></path><path d="M118 32l9 2-2 9-8-2z"></path></g><g fill="#2F5E9A"><path d="M120 38l5-2 2 5-5 2z"></path></g><g fill="#0C0C0C"><path d="M25 30l10 0 0 13-10 0z"></path><path d="M55 31l12 2-2 10-10-1z"></path><path d="M75 30l12 0 0 13-12 0z"></path></g></svg>
</div>
<div class="a" style="left:278px;top:145px;width:8px;height:480px;background:#E8E8E8"></div>

<!-- SCROLLBAR -->
<div class="a" style="left:1262px;top:145px;width:18px;height:480px;background:#DADADA"></div>
<div class="a" style="left:1261px;top:145px;width:1px;height:480px;background:#E3E3E3"></div>
<div class="a" style="left:1264px;top:146px;width:16px;height:15px;background:#fff"></div>
<svg class="a" style="left:1264px;top:146px" width="16" height="15"><path d="M4.5 9.5h7l-3.5-4z" fill="#606060"></path></svg>
<div class="a" style="left:1263.5px;top:484.5px;width:16.5px;height:22.5px;background:#fff;border:1px solid #C8C8C8"></div>
<div class="a" style="left:1264px;top:555px;width:16px;height:15px;background:#fff"></div>
<svg class="a" style="left:1264px;top:555px" width="16" height="15"><path d="M4.5 5.5h7l-3.5 4z" fill="#606060"></path></svg>
<svg class="a" style="left:1264px;top:572px" width="16" height="36"><path d="M4.5 8.5l3.5-4 3.5 4zM4.5 12.5l3.5-4 3.5 4z M4.5 23l3.5 4 3.5-4zM4.5 27l3.5 4 3.5-4z" fill="#707070"></path></svg>

<!-- NOTES AREA -->
<div class="t" style="left:273px;top:632.8px;font-size:15.4px;color:#595959">к</div>
<div class="t" style="left: 284px; top: 632.8px; font-size: 15.4px; color: rgb(89, 89, 89); transform: scaleX(0.8908); transform-origin: 0px 50%;">слайду</div>
<div class="a" style="left:183px;top:650px;width:15px;height:7px;background:#F8F8F8"></div>

<!-- STATUS BAR -->
<div class="a" style="left:0;top:657.5px;width:1280px;height:18.5px;background:#F1F1F1;border-top:1px solid #D6D6D6"></div>
<div class="t" style="left: 4.8px; top: 662.5px; font-size: 11px; color: rgb(90, 90, 90); transform: scaleX(0.9117); transform-origin: 0px 50%;">Слайд 15 из 17</div>
<svg class="a" style="left:92px;top:660px" width="24" height="15"><path d="M1.5 1.5h9v11h-9zM10.5 1.5l4 2v9l-4-2" fill="none" stroke="#777" stroke-width="1"></path><path d="M14 5l5 5M19 5l-5 5" stroke="#777" stroke-width="1"></path></svg>
<div class="t" style="left: 116.5px; top: 662.5px; font-size: 11px; color: rgb(90, 90, 90); transform: scaleX(0.9405); transform-origin: 0px 50%;">английский (США)</div>
<svg class="a" style="left:810px;top:660px" width="16" height="15"><path d="M2 6h10M2 9h10M2 12h10" stroke="#777" stroke-width="0.9"></path><path d="M5 4.5l2-2.5 2 2.5z" fill="#666"></path></svg>
<div class="t" style="left: 827px; top: 662.5px; font-size: 11px; color: rgb(90, 90, 90); transform: scaleX(0.9506); transform-origin: 0px 50%;">Заметки</div>
<svg class="a" style="left:881px;top:660px" width="16" height="15"><path d="M1.5 1.5h12v8h-6l-3 3v-3h-3z" fill="#6A6A6A"></path></svg>
<div class="t" style="left: 898px; top: 662.5px; font-size: 11px; color: rgb(90, 90, 90); transform: scaleX(0.9446); transform-origin: 0px 50%;">Примечания</div>
<div class="a" style="left:973.5px;top:658px;width:29px;height:18px;background:#C9C9C9"></div>
<svg class="a" style="left:973px;top:658px" width="180" height="18">
 <g fill="none" stroke="#6E6E6E" stroke-width="1">
  <rect x="9.5" y="3.5" width="12" height="12"></rect><path d="M12.5 3.5v12"></path><rect x="15" y="6.5" width="4.5" height="4.5"></rect>
  <rect x="39.5" y="3.5" width="5.5" height="5.5"></rect><rect x="47" y="3.5" width="5.5" height="5.5"></rect><rect x="39.5" y="10.5" width="5.5" height="5.5"></rect><rect x="47" y="10.5" width="5.5" height="5.5"></rect>
  <path d="M69.5 4.5h5.5l0.5 1 0.5-1h5.5v11h-5.5l-0.5 1-0.5-1h-5.5z"></path><path d="M70.5 7h3.5M70.5 9.5h3.5M70.5 12h3.5M77 7h3.5M77 9.5h3.5M77 12h3.5" stroke-width="0.6"></path>
  <path d="M99.5 3.5h13M100.5 4v7h11V4M106 11v4.5M103 16h6"></path>
 </g>
 <path d="M123 11.5h8" stroke="#6A6A6A" stroke-width="2"></path>
</svg>
<svg class="a" style="left:1100px;top:658px" width="180" height="18">
 <path d="M7 11.5h100" stroke="#BDBDBD" stroke-width="1"></path>
 <rect x="49" y="5" width="5" height="12" fill="#6A6A6A"></rect><path d="M58.5 8v7" stroke="#BDBDBD" stroke-width="1"></path>
 <path d="M112 11.5h9M116.5 7v9" stroke="#6A6A6A" stroke-width="2"></path>
 <rect x="163.5" y="4.5" width="13" height="12.5" fill="none" stroke="#A0A0A0" stroke-width="0.9"></rect><path d="M166 7l2.5 2.5M174 7l-2.5 2.5M166 14.5l2.5-2.5M174 14.5l-2.5-2.5" stroke="#888" stroke-width="0.9"></path>
</svg>
<div class="t" style="left: 1231.4px; top: 662.5px; font-size: 11px; color: rgb(90, 90, 90); transform: scaleX(0.9532); transform-origin: 0px 50%;">86%</div>

<!-- ZOOM PANEL -->
<div class="a" id="zoom" style="left:47.5px;top:139.5px;width:230.5px;height:509.5px;background:#16191C;border-radius:4px;overflow:hidden">
 <!-- tile 1 -->
 <div class="a" style="left:2.5px;top:3px;width:226px;height:127px;background:#242424;border:2px solid #2CD88E;border-radius:7px;overflow:hidden">
  <svg class="a" style="left:0;top:0" width="222" height="123" viewBox="50 143 222 123">
   <defs>
    <linearGradient id="zw" x1="0" y1="0" x2="1" y2="0"><stop offset="0" stop-color="#E9EEF0"></stop><stop offset="0.7" stop-color="#F6F8F8"></stop><stop offset="1" stop-color="#C8CCCC"></stop></linearGradient>
    <linearGradient id="zc" x1="0" y1="0" x2="1" y2="0"><stop offset="0" stop-color="#5F605C"></stop><stop offset="0.5" stop-color="#4A4A44"></stop><stop offset="1" stop-color="#55524A"></stop></linearGradient>
    <filter id="zb" x="-20%" y="-20%" width="140%" height="140%"><feGaussianBlur stdDeviation="2.5"></feGaussianBlur></filter>
    <filter id="zb1" x="-20%" y="-20%" width="140%" height="140%"><feGaussianBlur stdDeviation="2.2"></feGaussianBlur></filter>
   </defs>
   <clipPath id="zclip"><rect x="79" y="140" width="168" height="130"></rect></clipPath><g clip-path="url(#zclip)"><rect x="79" y="143" width="168" height="125" fill="#5A5448"></rect>
   <g filter="url(#zb)">
    <rect x="70" y="140" width="43" height="112" fill="#F2F5F5"></rect>
    <rect x="70" y="248" width="43" height="25" fill="#B8BCBA"></rect>
    <rect x="112" y="140" width="33" height="130" fill="#4C4E4C"></rect>
    <rect x="145" y="140" width="60" height="130" fill="#5E584C"></rect>
    <rect x="205" y="140" width="45" height="130" fill="#4E4A40"></rect>
   </g>
   <g filter="url(#zb1)">
    <path d="M140 250 C136 200 138 150 170 148 C200 148 206 180 205 210 L212 268 L186 268 L186 220 L160 220 L160 255z" fill="#5A4030"></path>
    <ellipse cx="170" cy="186" rx="19" ry="26" fill="#A08676"></ellipse>
    <path d="M163 208 L178 208 L180 225 L160 225z" fill="#7E6050"></path><path d="M155 225 L195 222 L200 270 L150 270z" fill="#5E6648"></path>
    <path d="M112 270 C113 240 118 215 135 208 C145 205 150 210 155 225 L 170 268z" fill="#A9BB8C"></path>
    <path d="M175 240 C185 220 200 210 215 220 C228 230 235 250 238 270 L170 270z" fill="#3F5840"></path>
    <path d="M143 200 C141 230 150 250 158 268 L168 268 C160 245 155 225 156 205z" fill="#80603F"></path>
    <path d="M188 205 C190 235 196 255 198 268 L210 268 C208 245 204 225 202 205z" fill="#86623F"></path>
   </g>
  </g>
  </svg>
  <div class="a" style="left:0;top:102px;width:97px;height:21px;background:rgba(20,20,20,.55)"></div>
  <div class="t" style="left: 5px; top: 107.5px; font-size: 12.5px; color: rgb(242, 242, 242); transform: scaleX(1.0031); transform-origin: 0px 50%;">Аліна Смаглюк</div>
 </div>
 <!-- tile 2 avatar -->
 <div class="a" style="left:76px;top:152.5px;width:80px;height:79px;border-radius:9px;overflow:hidden;background:#1E2418">
  <svg class="a" style="left:0;top:0" width="80" height="79" viewBox="123.5 292 80 79">
   <defs><filter id="ab" x="-20%" y="-20%" width="140%" height="140%"><feGaussianBlur stdDeviation="1.4"></feGaussianBlur></filter></defs>
   <rect x="123" y="292" width="81" height="80" fill="#121612"></rect>
   <g filter="url(#ab)">
    <rect x="123" y="318" width="81" height="54" fill="#252C1C"></rect>
    <ellipse cx="145" cy="305" rx="22" ry="10" fill="#1C2A22"></ellipse>
    <ellipse cx="140" cy="313" rx="4" ry="2" fill="#8AA8A0" opacity="0.6"></ellipse>
    <path d="M176 347 L204 339 L204 371 L158 371z" fill="#7A6A52"></path>
    <ellipse cx="189" cy="308" rx="9" ry="3.5" fill="#C8DCD0" opacity="0.85"></ellipse>
    <path d="M158 313 L 177 311 L 180 341 L 157 341z" fill="#141414"></path>
    <path d="M165 314 L 171 314 L 170 338 L 166 338z" fill="#44484A"></path>
    <ellipse cx="167" cy="304" rx="5" ry="7" fill="#BFAE8C"></ellipse>
    <path d="M156 337 L 177 337 L 179 371 L 167 371 L 166 350 L 164 371 L 151 371z" fill="#BCAC88"></path>
   </g>
  </svg>
 </div>
 <div class="a" style="left:6.5px;top:233.5px;width:120px;height:19px;background:#2A2D30;border-radius:4px"></div>
 <svg class="a" style="left:8px;top:235.5px" width="16" height="16"><path d="M7.3 1.2a3.2 3.2 0 0 1 3.2 3.2v4.3a3.2 3.2 0 0 1-2.2 3v2.8h-2.2v-2.8a3.2 3.2 0 0 1-2.2-3V4.4a3.2 3.2 0 0 1 3.2-3.2z" fill="#E8636A"></path><path d="M1 14.5L14 1.5" stroke="#2A2D30" stroke-width="2.6"></path><path d="M1 14.5L14 1.5" stroke="#E8636A" stroke-width="1.1"></path></svg>
 <div class="t" style="left: 28.5px; top: 238px; font-size: 12.5px; color: rgb(234, 234, 234); transform: scaleX(0.98); transform-origin: 0px 50%;">Bogdana989 Hlib</div>
 <!-- tile 3 -->
 <div class="t" style="left: 47.8px; top: 308px; font-size: 22px; font-weight: bold; color: rgb(255, 255, 255); transform: scaleX(1.0141); transform-origin: 0px 50%;">Палій Артур</div>
 <div class="a" style="left:6.5px;top:360px;width:95px;height:19px;background:#2A2D30;border-radius:4px"></div>
 <svg class="a" style="left:8px;top:362px" width="16" height="16"><path d="M7.3 1.2a3.2 3.2 0 0 1 3.2 3.2v4.3a3.2 3.2 0 0 1-2.2 3v2.8h-2.2v-2.8a3.2 3.2 0 0 1-2.2-3V4.4a3.2 3.2 0 0 1 3.2-3.2z" fill="#E8636A"></path><path d="M1 14.5L14 1.5" stroke="#2A2D30" stroke-width="2.6"></path><path d="M1 14.5L14 1.5" stroke="#E8636A" stroke-width="1.1"></path></svg>
 <div class="t" style="left: 28.5px; top: 364.5px; font-size: 12.5px; color: rgb(234, 234, 234); transform: scaleX(0.9658); transform-origin: 0px 50%;">Палій Артур</div>
 <!-- tile 4 -->
 <div class="t" style="left: 30.5px; top: 434px; font-size: 22px; font-weight: bold; color: rgb(255, 255, 255); transform: scaleX(1.019); transform-origin: 0px 50%;">Лепеха Альона</div>
 <div class="a" style="left:6.5px;top:486px;width:112px;height:19px;background:#2A2D30;border-radius:4px"></div>
 <svg class="a" style="left:8px;top:488px" width="16" height="16"><path d="M7.3 1.2a3.2 3.2 0 0 1 3.2 3.2v4.3a3.2 3.2 0 0 1-2.2 3v2.8h-2.2v-2.8a3.2 3.2 0 0 1-2.2-3V4.4a3.2 3.2 0 0 1 3.2-3.2z" fill="#E8636A"></path><path d="M1 14.5L14 1.5" stroke="#2A2D30" stroke-width="2.6"></path><path d="M1 14.5L14 1.5" stroke="#E8636A" stroke-width="1.1"></path></svg>
 <div class="t" style="left: 28.5px; top: 490.5px; font-size: 12.5px; color: rgb(234, 234, 234); transform: scaleX(0.9762); transform-origin: 0px 50%;">Лепеха Альона</div>
</div>
<!-- pen button -->
<div class="a" style="left:15.5px;top:629.5px;width:30.5px;height:30.5px;border-radius:50%;background:#26292C;box-shadow:0 0 1px rgba(0,0,0,.5)"></div>
<svg class="a" style="left:15.5px;top:629.5px" width="31" height="31"><path d="M9.5 20.5l0.8-3.5 8.5-8.5 2.8 2.8-8.5 8.5z M17.3 10l2.8 2.8" fill="none" stroke="#2BC27E" stroke-width="1.3"></path><path d="M9 22.5h14" stroke="#2BC27E" stroke-width="1.3"></path></svg>


</body></html>
